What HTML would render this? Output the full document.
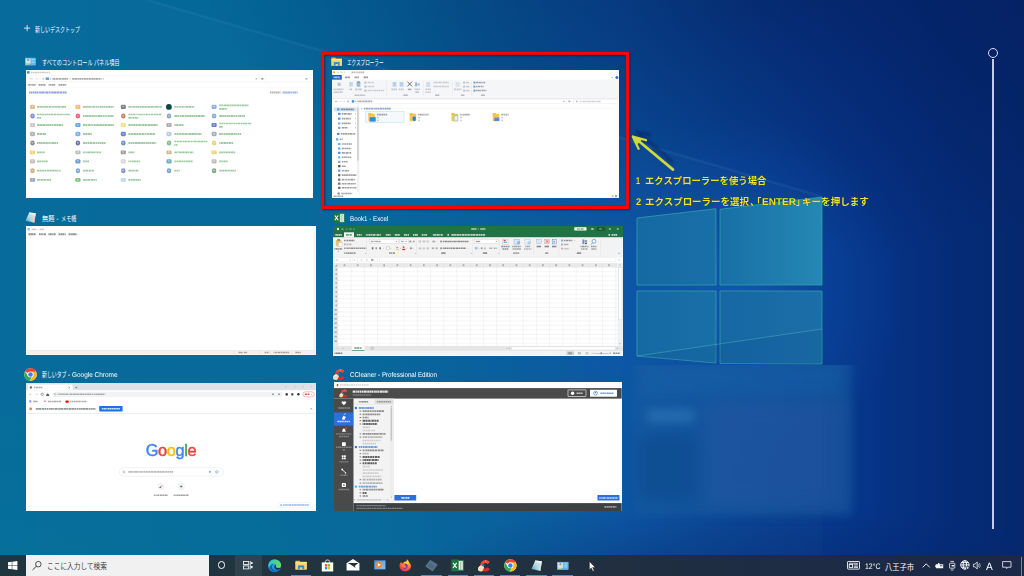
<!DOCTYPE html>
<html lang="ja"><head><meta charset="utf-8"><title>Task View</title>
<style>
html,body{margin:0;padding:0}
body{width:1024px;height:576px;overflow:hidden;position:relative;background:#04699a;font-family:"Liberation Sans",sans-serif}
div,svg,span.lt,span.ht{position:absolute}
svg{overflow:visible}
span.lt{white-space:nowrap;transform-origin:0 0;text-rendering:geometricPrecision;-webkit-font-smoothing:antialiased}
span.ht{white-space:nowrap;color:transparent;overflow:hidden;line-height:1;height:1.2em;user-select:none}
.th{overflow:hidden;background:#fff}
.b{filter:blur(.45px)}
svg text.jt{font-family:"Liberation Sans","Noto Sans CJK JP",sans-serif}
</style></head><body>
<div style="left:0;top:0;width:1024px;height:576px;background:radial-gradient(ellipse 170px 175px at 735px 292px, rgba(16,100,190,.5), rgba(12,85,175,.25) 55%, rgba(10,70,150,0) 100%),radial-gradient(ellipse 580px 300px at 780px -40px, rgba(3,22,80,.6), rgba(3,22,80,.28) 55%, rgba(3,22,80,0) 100%),radial-gradient(ellipse 640px 240px at 0px 576px, rgba(0,118,150,.32), rgba(0,118,150,0) 100%),radial-gradient(ellipse 360px 90px at 740px 590px, rgba(3,35,100,.5), rgba(3,35,100,.25) 55%, rgba(3,35,100,0) 100%),linear-gradient(90deg,#04699a 0,#046899 250px,#05649a 400px,#075c9d 520px,#0a55a3 620px,#094b9c 700px,#083d93 800px,#063386 880px,#052c78 950px,#05286f 1024px)"></div><svg style="left:0;top:0" width="1024" height="576" viewBox="0 0 1024 576"><defs><linearGradient id="pg" x1="0" y1="0" x2="1" y2="0"><stop offset="0" stop-color="#186fa6"/><stop offset="1" stop-color="#2588b4"/></linearGradient><linearGradient id="pg2" x1="0" y1="0" x2="1" y2="0"><stop offset="0" stop-color="#1569a3"/><stop offset="1" stop-color="#196fa7"/></linearGradient><linearGradient id="pg3" x1="0" y1="0" x2="1" y2="0"><stop offset="0" stop-color="#1667a3"/><stop offset="1" stop-color="#1b6fa8"/></linearGradient><filter id="bl8" x="-20%" y="-20%" width="140%" height="140%"><feGaussianBlur stdDeviation="7"/></filter><filter id="bl3" x="-20%" y="-20%" width="140%" height="140%"><feGaussianBlur stdDeviation="3"/></filter></defs><polygon points="147,0 822,196.5 822,576 0,576 0,0" fill="rgba(255,255,255,.015)"/><line x1="147" y1="0" x2="822" y2="196.5" stroke="rgba(150,200,240,.075)" stroke-width="2.6"/><polygon points="637,218 716,208.7 716,285 637,285" fill="url(#pg2)" stroke="#35aaa6" stroke-width=".7"/><polygon points="720,209.3 822,197 822,285 720,285" fill="url(#pg)" stroke="#35aaa6" stroke-width=".7"/><polygon points="637,291 716,291 716,363 637,356" fill="url(#pg2)" stroke="#35aaa6" stroke-width=".7"/><polygon points="720,291 822,291 822,364 720,363.5" fill="url(#pg3)" stroke="#35aaa6" stroke-width=".7"/><polygon points="637,356 822,329 822,364 720,363.5 716,363" fill="rgba(10,70,140,.18)"/><line x1="637" y1="356" x2="822" y2="329" stroke="rgba(80,190,190,.55)" stroke-width=".8"/></svg><div style="left:600px;top:364.5px;width:300px;height:185px;overflow:hidden"><div style="left:34px;top:-8px;width:218px;height:158px;background:rgba(24,92,160,.6);filter:blur(5px)"></div><div style="left:40px;top:0px;width:200px;height:30px;background:rgba(22,100,170,.35);filter:blur(5px)"></div><div style="left:48px;top:44px;width:46px;height:14px;background:rgba(60,135,195,.4);filter:blur(4px)"></div><div style="left:104px;top:36px;width:140px;height:105px;background:rgba(55,85,160,.28);filter:blur(9px)"></div><div style="left:38px;top:70px;width:58px;height:66px;background:rgba(6,60,120,.32);filter:blur(7px)"></div></div><svg style="left:24px;top:25.3px" width="6.2" height="6.2" viewBox="0 0 6.2 6.2"><path d="M3.1 0V6.2M0 3.1H6.2" stroke="#fff" stroke-width=".8" fill="none"/></svg><svg style="left:35px;top:25px;" width="46" height="9.24" viewBox="0 0 46 9.24"><text class="jt" x="0" y="6.65" font-size="6.6" fill="#fff" textLength="45" lengthAdjust="spacingAndGlyphs">新しいデスクトップ</text></svg><div class="th" id="cp" style="left:26px;top:70px;width:287.1px;height:128.4px"><svg class="b" style="left:0;top:0" width="287.1" height="128.4" viewBox="26 70 287.1 128.4"><rect x="27" y="71.2" width="2.6" height="2.4" fill="#3d8fe0"/><path d="M31 72.4h19" stroke="#888" stroke-width="1.5" opacity="0.45" stroke-dasharray="1.61 0.49 1.53 0.35 2.03 0.52 1.79 0.38 1.82 0.35 1.94 0.3 1.99 0.45 1.54 0.53 2.38 0.31"/><path d="M30 78.8h3" stroke="#bbb" stroke-width="1.2" opacity="0.6"/><path d="M35.5 78.8h3" stroke="#ccc" stroke-width="1.2" opacity="0.6"/><path d="M42.5 78.8h1.6" stroke="#c88" stroke-width="1.4" opacity="0.7"/><rect x="45.6" y="77.4" width="3.4" height="2.6" fill="#5aa5dc"/><path d="M50 78.8h1" stroke="#888" stroke-width="1.2" opacity="0.6"/><path d="M52.5 78.8h15.5" stroke="#555" stroke-width="1.8" opacity="0.5" stroke-dasharray="2.66 0.47 2.54 0.42 2.66 0.53 2.11 0.32 2.3 0.34 1.43 0.37"/><path d="M69.6 78.8h1" stroke="#888" stroke-width="1.2" opacity="0.6"/><path d="M72.2 78.8h29.5" stroke="#555" stroke-width="1.8" opacity="0.5" stroke-dasharray="2.21 0.27 2.64 0.42 1.18 0.36 2.25 0.47 1.29 0.48 2.24 0.35 1.99 0.39 2.12 0.45 2.47 0.28 1.63 0.3 2.58 0.46 1.56 0.55 2.52 0.42"/><path d="M102.8 78.8h1" stroke="#888" stroke-width="1.2" opacity="0.6"/><rect x="27" y="81.6" width="285" height="0.5" fill="#ececec"/><rect x="27" y="75.4" width="285" height="0.4" fill="#f0f0f0"/><path d="M255.6 78.8h1.4" stroke="#888" stroke-width="1.2" opacity="0.7"/><path d="M261.4 78.8h2" stroke="#666" stroke-width="1.6" opacity="0.7"/><rect x="258.5" y="76.2" width="0.4" height="5" fill="#e4e4e4"/><rect x="265" y="76.2" width="0.4" height="5" fill="#e4e4e4"/><path d="M305.5 78.8h2" stroke="#888" stroke-width="1.6" opacity="0.6"/><path d="M28.2 84.9h7.4" stroke="#333" stroke-width="1.8" opacity="0.48" stroke-dasharray="2.17 0.38 0.87 0.53 1.6 0.31 1.92 0.49"/><path d="M38.6 84.9h7.2" stroke="#333" stroke-width="1.8" opacity="0.48" stroke-dasharray="1.76 0.33 1.95 0.53 2.1 0.31 1.65 0.42"/><path d="M48.6 84.9h7.2" stroke="#333" stroke-width="1.8" opacity="0.48" stroke-dasharray="1.16 0.41 1.41 0.53 1.68 0.31 0.88 0.54 2 0.44"/><path d="M58.6 84.9h7.6" stroke="#333" stroke-width="1.8" opacity="0.48" stroke-dasharray="2.13 0.29 1.33 0.5 1.87 0.47 1.5 0.49"/><rect x="27" y="87.4" width="285" height="0.4" fill="#f2f2f2"/><path d="M29 92.5h37.5" stroke="#2d52b8" stroke-width="2" opacity="0.55" stroke-dasharray="1.34 0.47 1.41 0.46 1.24 0.43 2.02 0.34 1.34 0.48 1.26 0.28 1.61 0.26 2 0.48 1.13 0.31 2.36 0.46 1.23 0.36 1.19 0.31 1.67 0.25 2.73 0.37 2.52 0.41 2.73 0.53 1.23 0.33 2.65 0.46"/><path d="M270 92.5h10.5" stroke="#666" stroke-width="1.9" opacity="0.5" stroke-dasharray="1.29 0.51 1.24 0.38 1.51 0.51 2.14 0.31 1.41 0.38 1.01 0.26"/><path d="M282.6 92.5h15" stroke="#3a73d8" stroke-width="1.9" opacity="0.55" stroke-dasharray="2.19 0.5 2.39 0.44 2.48 0.52 1.15 0.48 1.72 0.35 1.55 0.51 2.05 0.33"/><rect x="30" y="104.7" width="5" height="4.4" fill="#c9a85c" rx="1.4" opacity="0.72"/><circle cx="32.4" cy="106.6" r="1" fill="#fff" opacity="0.4"/><path d="M37 106.9h29" stroke="#3f9646" stroke-width="1.8" opacity="0.5" stroke-dasharray="2.58 0.45 1.78 0.28 1.51 0.5 1.89 0.38 1.72 0.39 2.71 0.42 1.07 0.28 1.56 0.51 1.92 0.46 2.52 0.35 1.21 0.36 2.79 0.31 2.38 0.34"/><rect x="30.3" y="113.5" width="4.4" height="5" fill="#4a5fc4" rx="2.2" opacity="0.72"/><circle cx="32.4" cy="115.7" r="1" fill="#fff" opacity="0.4"/><path d="M37 114.5h33" stroke="#3f9646" stroke-width="1.7" opacity="0.5" stroke-dasharray="2.48 0.4 1.82 0.36 2.02 0.37 1.97 0.33 1.43 0.29 1.64 0.4 2.59 0.51 2.68 0.49 2.1 0.42 2.41 0.44 1.24 0.28 1.07 0.44 1.2 0.28 2.25 0.27 2.05 0.53"/><path d="M37 117.9h4" stroke="#3f9646" stroke-width="1.7" opacity="0.5" stroke-dasharray="1.98 0.34 2.31 0.41"/><rect x="29.9" y="123.1" width="5.2" height="3.9" fill="#b4b4b4" rx="1" opacity="0.72"/><circle cx="32.4" cy="124.7" r="1" fill="#fff" opacity="0.4"/><path d="M37 125h26" stroke="#3f9646" stroke-width="1.8" opacity="0.5" stroke-dasharray="2.42 0.28 2.42 0.34 2.81 0.28 1.35 0.3 1.74 0.37 1.69 0.43 2.01 0.5 2.05 0.27 2.09 0.4 2.84 0.49 1.58 0.41"/><rect x="30" y="131.8" width="5" height="4.4" fill="#8f9499" rx="1.4" opacity="0.72"/><circle cx="32.4" cy="133.7" r="1" fill="#fff" opacity="0.4"/><path d="M37 134h9.4" stroke="#3f9646" stroke-width="1.8" opacity="0.5" stroke-dasharray="2.36 0.4 2.73 0.47 2.87 0.5 1.99 0.41"/><rect x="30.3" y="140.5" width="4.4" height="5" fill="#5d6066" rx="2.2" opacity="0.72"/><circle cx="32.4" cy="142.7" r="1" fill="#fff" opacity="0.4"/><path d="M37 143h21" stroke="#3f9646" stroke-width="1.8" opacity="0.5" stroke-dasharray="1.3 0.39 2.12 0.27 1.68 0.39 2.47 0.41 1.79 0.42 1.47 0.54 1.33 0.37 2.12 0.25 2.05 0.54 1.24 0.43"/><rect x="29.9" y="150.4" width="5.2" height="3.9" fill="#e6c13e" rx="1" opacity="0.72"/><circle cx="32.4" cy="152" r="1" fill="#fff" opacity="0.4"/><path d="M37 152.3h8" stroke="#3f9646" stroke-width="1.8" opacity="0.5" stroke-dasharray="2.71 0.31 1.76 0.48 2.32 0.31 2.48 0.51"/><rect x="30" y="159.2" width="5" height="4.4" fill="#a9a9a9" rx="1.4" opacity="0.72"/><circle cx="32.4" cy="161.1" r="1" fill="#fff" opacity="0.4"/><path d="M37 161.4h11" stroke="#3f9646" stroke-width="1.8" opacity="0.5" stroke-dasharray="1.93 0.27 2.17 0.43 1.61 0.29 1.19 0.37 2.21 0.28 2.8 0.48"/><rect x="30.3" y="168.2" width="4.4" height="5" fill="#b3924f" rx="2.2" opacity="0.72"/><circle cx="32.4" cy="170.4" r="1" fill="#fff" opacity="0.4"/><path d="M37 170.7h24" stroke="#3f9646" stroke-width="1.8" opacity="0.5" stroke-dasharray="2.59 0.41 1.73 0.31 2.12 0.36 1.96 0.51 2.19 0.29 2.15 0.29 2.18 0.32 2.29 0.43 1.06 0.5 1.1 0.53 2.87 0.55"/><rect x="29.9" y="177.9" width="5.2" height="3.9" fill="#6f7f9f" rx="1" opacity="0.72"/><circle cx="32.4" cy="179.5" r="1" fill="#fff" opacity="0.4"/><path d="M37 179.8h14.6" stroke="#3f9646" stroke-width="1.8" opacity="0.5" stroke-dasharray="2.82 0.53 2.8 0.26 2.58 0.53 2.67 0.42 1.55 0.42 2.18 0.46"/><rect x="75.4" y="104.7" width="5" height="4.4" fill="#f2a233" rx="1.4" opacity="0.72"/><circle cx="77.8" cy="106.6" r="1" fill="#fff" opacity="0.4"/><path d="M83 106.9h30.8" stroke="#3f9646" stroke-width="1.8" opacity="0.5" stroke-dasharray="2.57 0.3 1.98 0.36 2.58 0.53 1.16 0.4 2.28 0.55 1.3 0.46 1.86 0.45 1.17 0.27 1.79 0.43 1.9 0.47 1.75 0.36 2.1 0.37 2.42 0.35 1.08 0.45"/><rect x="75.7" y="113.5" width="4.4" height="5" fill="#e0204c" rx="2.2" opacity="0.72"/><circle cx="77.8" cy="115.7" r="1" fill="#fff" opacity="0.4"/><path d="M83 116h30.8" stroke="#3f9646" stroke-width="1.8" opacity="0.5" stroke-dasharray="1.3 0.39 2.12 0.27 1.68 0.39 2.47 0.41 1.79 0.42 1.47 0.54 1.33 0.37 2.12 0.25 2.05 0.54 1.24 0.43 1.19 0.42 1.18 0.55 1.89 0.54 2.47 0.41 1.26 0.41"/><rect x="75.3" y="123.1" width="5.2" height="3.9" fill="#2b84e2" rx="1" opacity="0.72"/><circle cx="77.8" cy="124.7" r="1" fill="#fff" opacity="0.4"/><path d="M83 125h30.8" stroke="#3f9646" stroke-width="1.8" opacity="0.5" stroke-dasharray="2.15 0.33 1.47 0.53 2.57 0.32 1.3 0.36 1.24 0.48 2.05 0.38 2.63 0.34 2.68 0.46 2.25 0.37 2.2 0.46 2.77 0.27 1.68 0.28 2.37 0.34"/><rect x="75.4" y="131.8" width="5" height="4.4" fill="#4293e2" rx="1.4" opacity="0.72"/><circle cx="77.8" cy="133.7" r="1" fill="#fff" opacity="0.4"/><path d="M83 134h8.8" stroke="#3f9646" stroke-width="1.8" opacity="0.5" stroke-dasharray="2.2 0.36 2.02 0.38 2.09 0.27 2.73 0.26"/><rect x="75.7" y="140.5" width="4.4" height="5" fill="#2f3f86" rx="2.2" opacity="0.72"/><circle cx="77.8" cy="142.7" r="1" fill="#fff" opacity="0.4"/><path d="M83 143h22.6" stroke="#3f9646" stroke-width="1.8" opacity="0.5" stroke-dasharray="2.09 0.37 1.66 0.43 1.94 0.42 2.56 0.5 1.99 0.54 1.69 0.55 1.37 0.45 1.77 0.39 1.98 0.3 1.82 0.38"/><rect x="75.3" y="150.4" width="5.2" height="3.9" fill="#a4a8a4" rx="1" opacity="0.72"/><circle cx="77.8" cy="152" r="1" fill="#fff" opacity="0.4"/><path d="M83 152.3h18" stroke="#3f9646" stroke-width="1.8" opacity="0.5" stroke-dasharray="1.29 0.32 1.04 0.48 1.46 0.33 2.43 0.35 2.13 0.32 1.84 0.43 1.26 0.29 1.78 0.53 2.48 0.52"/><rect x="75.4" y="159.2" width="5" height="4.4" fill="#3273c4" rx="1.4" opacity="0.72"/><circle cx="77.8" cy="161.1" r="1" fill="#fff" opacity="0.4"/><path d="M83 161.4h6" stroke="#3f9646" stroke-width="1.8" opacity="0.5" stroke-dasharray="2.41 0.35 1.23 0.29 1.73 0.46"/><rect x="75.7" y="168.2" width="4.4" height="5" fill="#4a86c0" rx="2.2" opacity="0.72"/><circle cx="77.8" cy="170.4" r="1" fill="#fff" opacity="0.4"/><path d="M83 170.7h11" stroke="#3f9646" stroke-width="1.8" opacity="0.5" stroke-dasharray="2.43 0.28 2.49 0.52 2.85 0.53 2.19 0.37"/><rect x="75.3" y="177.9" width="5.2" height="3.9" fill="#43b244" rx="1" opacity="0.72"/><circle cx="77.8" cy="179.5" r="1" fill="#fff" opacity="0.4"/><path d="M83 179.8h13.8" stroke="#3f9646" stroke-width="1.8" opacity="0.5" stroke-dasharray="2.36 0.25 1.7 0.37 2.73 0.5 2.44 0.38 1.45 0.49 1.6 0.31"/><rect x="120.8" y="104.7" width="5" height="4.4" fill="#3f4f56" rx="1.4" opacity="0.72"/><circle cx="123.2" cy="106.6" r="1" fill="#fff" opacity="0.4"/><path d="M128.4 106.9h33.7" stroke="#3f9646" stroke-width="1.8" opacity="0.5" stroke-dasharray="2.45 0.47 1.41 0.35 1.9 0.42 2.34 0.31 1.64 0.4 1.44 0.34 2.19 0.34 2.68 0.51 2.3 0.39 2.77 0.41 1.28 0.37 2.71 0.39 1.27 0.4 1.42 0.27 1.11 0.4"/><rect x="121.1" y="113.5" width="4.4" height="5" fill="#a4502f" rx="2.2" opacity="0.72"/><circle cx="123.2" cy="115.7" r="1" fill="#fff" opacity="0.4"/><path d="M128.4 114.5h33" stroke="#3f9646" stroke-width="1.7" opacity="0.5" stroke-dasharray="2.08 0.4 1.63 0.42 2.03 0.42 1.29 0.53 1.44 0.41 1.71 0.48 1.76 0.44 1.48 0.5 2.66 0.47 1.56 0.52 2.75 0.53 1.88 0.41 1.89 0.35 2.86 0.42"/><path d="M128.4 117.9h10" stroke="#3f9646" stroke-width="1.7" opacity="0.5" stroke-dasharray="2.59 0.34 1.33 0.28 1.18 0.49 2.85 0.31 1.49 0.28"/><rect x="120.7" y="123.1" width="5.2" height="3.9" fill="#e8d264" rx="1" opacity="0.72"/><circle cx="123.2" cy="124.7" r="1" fill="#fff" opacity="0.4"/><path d="M128.4 125h29.3" stroke="#3f9646" stroke-width="1.8" opacity="0.5" stroke-dasharray="1.8 0.33 2.2 0.43 2.09 0.44 2.04 0.53 2.69 0.54 2.67 0.38 2.74 0.54 2.78 0.39 1.79 0.32 2.79 0.43 2.36 0.53"/><rect x="120.8" y="131.8" width="5" height="4.4" fill="#2f4fc4" rx="1.4" opacity="0.72"/><circle cx="123.2" cy="133.7" r="1" fill="#fff" opacity="0.4"/><path d="M128.4 134h27" stroke="#3f9646" stroke-width="1.8" opacity="0.5" stroke-dasharray="2.03 0.42 2.53 0.32 2.72 0.27 1.44 0.39 2.73 0.49 2.72 0.47 1.44 0.52 2.07 0.48 2.56 0.36 2.61 0.52"/><rect x="121.1" y="140.5" width="4.4" height="5" fill="#2f62c4" rx="2.2" opacity="0.72"/><circle cx="123.2" cy="142.7" r="1" fill="#fff" opacity="0.4"/><path d="M128.4 143h27.8" stroke="#3f9646" stroke-width="1.8" opacity="0.5" stroke-dasharray="1.69 0.44 1.55 0.44 2.05 0.45 2.84 0.28 2.75 0.39 1.75 0.25 2.04 0.48 1.65 0.29 1.45 0.36 1.84 0.48 2.06 0.33 1.44 0.3 1.79 0.48"/><rect x="120.7" y="150.4" width="5.2" height="3.9" fill="#70787f" rx="1" opacity="0.72"/><circle cx="123.2" cy="152" r="1" fill="#fff" opacity="0.4"/><path d="M128.4 152.3h6.4" stroke="#3f9646" stroke-width="1.8" opacity="0.5" stroke-dasharray="1.46 0.3 2.72 0.28 1.24 0.41"/><rect x="120.8" y="159.2" width="5" height="4.4" fill="#c1c9d1" rx="1.4" opacity="0.72"/><circle cx="123.2" cy="161.1" r="1" fill="#fff" opacity="0.4"/><path d="M128.4 161.4h11.7" stroke="#3f9646" stroke-width="1.8" opacity="0.5" stroke-dasharray="1.38 0.35 1.17 0.47 1.42 0.34 2.39 0.33 2.32 0.48 1.42 0.35"/><rect x="121.1" y="168.2" width="4.4" height="5" fill="#5563c4" rx="2.2" opacity="0.72"/><circle cx="123.2" cy="170.4" r="1" fill="#fff" opacity="0.4"/><path d="M128.4 170.7h10.3" stroke="#3f9646" stroke-width="1.8" opacity="0.5" stroke-dasharray="2.73 0.31 1.96 0.27 1.15 0.5 2.73 0.29 1.59 0.27"/><rect x="120.7" y="177.9" width="5.2" height="3.9" fill="#a1c9e2" rx="1" opacity="0.72"/><circle cx="123.2" cy="179.5" r="1" fill="#fff" opacity="0.4"/><path d="M128.4 179.8h12.3" stroke="#3f9646" stroke-width="1.8" opacity="0.5" stroke-dasharray="1.94 0.35 1.87 0.33 2.51 0.41 1.28 0.34 1.79 0.33 2.21 0.45"/><circle cx="168.9" cy="106.9" r="2.9" fill="#0b4a40"/><path d="M174.4 106.9h20" stroke="#3f9646" stroke-width="1.8" opacity="0.5" stroke-dasharray="2.15 0.5 1.66 0.53 1.87 0.37 2.38 0.45 1.04 0.4 2.6 0.31 2.39 0.44 1.78 0.39 2.78 0.54"/><rect x="166.8" y="113.5" width="4.4" height="5" fill="#5f80b2" rx="2.2" opacity="0.72"/><circle cx="168.9" cy="115.7" r="1" fill="#fff" opacity="0.4"/><path d="M174.4 116h30.8" stroke="#3f9646" stroke-width="1.8" opacity="0.5" stroke-dasharray="2.77 0.29 1.87 0.53 1.45 0.3 2.53 0.52 1.21 0.34 2.63 0.32 2.17 0.38 1.32 0.4 2.28 0.32 1.36 0.36 2.83 0.54 2.83 0.46 1.68 0.33"/><rect x="166.4" y="123.1" width="5.2" height="3.9" fill="#8f8f8f" rx="1" opacity="0.72"/><circle cx="168.9" cy="124.7" r="1" fill="#fff" opacity="0.4"/><path d="M174.4 125h9.7" stroke="#3f9646" stroke-width="1.8" opacity="0.5" stroke-dasharray="1.37 0.33 2.31 0.49 2.49 0.42 1.6 0.48 1.29 0.43"/><rect x="166.5" y="131.8" width="5" height="4.4" fill="#9fb7d1" rx="1.4" opacity="0.72"/><circle cx="168.9" cy="133.7" r="1" fill="#fff" opacity="0.4"/><path d="M174.4 134h27.2" stroke="#3f9646" stroke-width="1.8" opacity="0.5" stroke-dasharray="1.84 0.45 1.44 0.37 1.24 0.31 1.56 0.35 1.94 0.55 2.87 0.41 1.17 0.27 2.53 0.25 2.04 0.3 1.83 0.27 1.4 0.45 2.33 0.27 1.17 0.29"/><rect x="166.8" y="140.5" width="4.4" height="5" fill="#4fa261" rx="2.2" opacity="0.72"/><circle cx="168.9" cy="142.7" r="1" fill="#fff" opacity="0.4"/><path d="M174.4 141.5h33" stroke="#3f9646" stroke-width="1.7" opacity="0.5" stroke-dasharray="2 0.5 2.37 0.42 2.23 0.51 1.66 0.35 2.51 0.41 2.62 0.52 1.55 0.31 1.08 0.44 2.56 0.25 1.07 0.33 2.13 0.3 2.75 0.25 1.7 0.39 2.35 0.36"/><path d="M174.4 144.9h3" stroke="#3f9646" stroke-width="1.7" opacity="0.5" stroke-dasharray="1.1 0.33 1.92 0.52"/><rect x="166.4" y="150.4" width="5.2" height="3.9" fill="#c2a05f" rx="1" opacity="0.72"/><circle cx="168.9" cy="152" r="1" fill="#fff" opacity="0.4"/><path d="M174.4 152.3h19" stroke="#3f9646" stroke-width="1.8" opacity="0.5" stroke-dasharray="2.62 0.53 1.09 0.53 2.6 0.26 2.3 0.35 2.83 0.42 1.32 0.51 2.35 0.34 1.97 0.33"/><rect x="166.5" y="159.2" width="5" height="4.4" fill="#2f90a2" rx="1.4" opacity="0.72"/><circle cx="168.9" cy="161.1" r="1" fill="#fff" opacity="0.4"/><path d="M174.4 161.4h18.5" stroke="#3f9646" stroke-width="1.8" opacity="0.5" stroke-dasharray="1.49 0.48 1.88 0.41 2.81 0.45 1.65 0.5 1.15 0.44 2.13 0.35 1.94 0.4 1.74 0.36 2.65 0.34"/><rect x="166.8" y="168.2" width="4.4" height="5" fill="#3f80c2" rx="2.2" opacity="0.72"/><circle cx="168.9" cy="170.4" r="1" fill="#fff" opacity="0.4"/><path d="M174.4 170.7h5.3" stroke="#3f9646" stroke-width="1.8" opacity="0.5" stroke-dasharray="2.16 0.51 1.04 0.4 1.53 0.38"/><rect x="211.6" y="104.7" width="5" height="4.4" fill="#6291d2" rx="1.4" opacity="0.72"/><circle cx="214" cy="106.6" r="1" fill="#fff" opacity="0.4"/><path d="M219.2 105.4h29.3" stroke="#3f9646" stroke-width="1.7" opacity="0.5" stroke-dasharray="2.41 0.4 1.19 0.52 2.8 0.33 2.37 0.4 1.78 0.29 2.1 0.36 2.43 0.4 2.67 0.38 1.11 0.49 2.46 0.33 2.41 0.35 1.51 0.37"/><path d="M219.2 108.8h8" stroke="#3f9646" stroke-width="1.7" opacity="0.5" stroke-dasharray="2.54 0.28 2.34 0.42 1.79 0.43 1.59 0.28"/><rect x="211.9" y="113.5" width="4.4" height="5" fill="#5291c2" rx="2.2" opacity="0.72"/><circle cx="214" cy="115.7" r="1" fill="#fff" opacity="0.4"/><path d="M219.2 116h25.8" stroke="#3f9646" stroke-width="1.8" opacity="0.5" stroke-dasharray="2.77 0.28 1.7 0.35 1.68 0.47 2.4 0.31 1.39 0.43 2.13 0.38 1.83 0.43 1.29 0.54 1.32 0.3 1.99 0.45 2.04 0.3 1.22 0.54"/><rect x="211.5" y="123.1" width="5.2" height="3.9" fill="#2f4fc2" rx="1" opacity="0.72"/><circle cx="214" cy="124.7" r="1" fill="#fff" opacity="0.4"/><path d="M219.2 123.5h32" stroke="#3f9646" stroke-width="1.7" opacity="0.5" stroke-dasharray="2.39 0.47 1.48 0.36 1.27 0.54 2.85 0.51 2.62 0.5 1.19 0.42 1.8 0.55 1.12 0.35 2.63 0.55 1.61 0.39 1.15 0.25 2.82 0.51 2.38 0.27 1.29 0.48"/><path d="M219.2 126.9h4" stroke="#3f9646" stroke-width="1.7" opacity="0.5" stroke-dasharray="2.83 0.52 1.63 0.42"/><rect x="211.6" y="131.8" width="5" height="4.4" fill="#7f90a2" rx="1.4" opacity="0.72"/><circle cx="214" cy="133.7" r="1" fill="#fff" opacity="0.4"/><path d="M219.2 134h22" stroke="#3f9646" stroke-width="1.8" opacity="0.5" stroke-dasharray="2.21 0.25 1.6 0.55 1.8 0.55 1.94 0.29 2.08 0.3 2.78 0.48 1.76 0.43 1.22 0.36 1.71 0.53 1.24 0.33"/><rect x="211.9" y="140.5" width="4.4" height="5" fill="#e2c23f" rx="2.2" opacity="0.72"/><circle cx="214" cy="142.7" r="1" fill="#fff" opacity="0.4"/><path d="M219.2 143h14" stroke="#3f9646" stroke-width="1.8" opacity="0.5" stroke-dasharray="1.05 0.53 2.26 0.5 2.73 0.31 1.81 0.49 2.2 0.39 2.75 0.3"/><rect x="211.5" y="150.4" width="5.2" height="3.9" fill="#e2c43f" rx="1" opacity="0.72"/><circle cx="214" cy="152" r="1" fill="#fff" opacity="0.4"/><path d="M219.2 152.3h16" stroke="#3f9646" stroke-width="1.8" opacity="0.5" stroke-dasharray="2.17 0.28 1.89 0.34 1.52 0.41 2.34 0.36 2.01 0.26 2.73 0.31 2.85 0.36"/><rect x="211.6" y="159.2" width="5" height="4.4" fill="#a2a2a2" rx="1.4" opacity="0.72"/><circle cx="214" cy="161.1" r="1" fill="#fff" opacity="0.4"/><path d="M219.2 161.4h8.8" stroke="#3f9646" stroke-width="1.8" opacity="0.5" stroke-dasharray="2.36 0.37 1.26 0.35 1.68 0.27 1.56 0.41 1.84 0.52"/><rect x="211.9" y="168.2" width="4.4" height="5" fill="#4f8252" rx="2.2" opacity="0.72"/><circle cx="214" cy="170.4" r="1" fill="#fff" opacity="0.4"/><path d="M219.2 170.7h16.7" stroke="#3f9646" stroke-width="1.8" opacity="0.5" stroke-dasharray="2.29 0.32 2.68 0.38 2.06 0.45 1.51 0.29 1.33 0.31 1.96 0.32 1.42 0.36 2.2 0.45"/></svg></div><div class="th" id="ex" style="left:332px;top:70px;width:287px;height:128.4px"><svg class="b" style="left:0;top:0" width="287" height="128.4" viewBox="332 70 287 128.4"><rect x="332.8" y="71.4" width="2.2" height="1.8" fill="#e8b63c"/><path d="M337 72.4h2" stroke="#bbb" stroke-width="1.4" opacity="0.6"/><path d="M340.5 72.4h2" stroke="#bbb" stroke-width="1.4" opacity="0.6"/><path d="M344 72.4h1" stroke="#bbb" stroke-width="1.4" opacity="0.6"/><path d="M351.6 72.4h12.6" stroke="#777" stroke-width="1.7" opacity="0.5" stroke-dasharray="2.12 0.29 0.91 0.48 1.27 0.43 1.19 0.46 1.6 0.32 1.4 0.32 2.07 0.32"/><rect x="332" y="75" width="9.8" height="4.8" fill="#1b5fb9"/><path d="M333.6 77.4h6.6" stroke="#fff" stroke-width="1.7" opacity="0.7" stroke-dasharray="1.14 0.27 2.01 0.37 1.48 0.5 1.8 0.32"/><path d="M345 77.4h5.2" stroke="#444" stroke-width="1.7" opacity="0.55" stroke-dasharray="2.21 0.43 2.3 0.5"/><path d="M354.6 77.4h4.4" stroke="#444" stroke-width="1.7" opacity="0.55" stroke-dasharray="1.22 0.31 1.41 0.54 2.25 0.33"/><path d="M363.6 77.4h4.4" stroke="#444" stroke-width="1.7" opacity="0.55" stroke-dasharray="2.41 0.31 1.77 0.42"/><circle cx="616.9" cy="77.4" r="1.5" fill="#2a78d6"/><path d="M611.5 77.4h1.6" stroke="#999" stroke-width="1.2" opacity="0.6"/><rect x="332" y="79.8" width="287" height="18.4" fill="#f5f6f7"/><rect x="332" y="98" width="287" height="0.5" fill="#dadbdc"/><rect x="337.6" y="82.6" width="3" height="3.4" fill="#9db4cc" opacity="0.7"/><path d="M333.4 89.4h10" stroke="#8f98a1" stroke-width="1.6" opacity="0.5" stroke-dasharray="1.31 0.55 1.26 0.49 1.59 0.28 1.98 0.44 1.12 0.31 1.14 0.49"/><path d="M333.8 92.2h9" stroke="#8f98a1" stroke-width="1.6" opacity="0.5" stroke-dasharray="1.89 0.28 1.64 0.34 1.32 0.41 2.03 0.36 1.75 0.26"/><rect x="349.2" y="82" width="3.6" height="4.6" fill="#b9cde2" opacity="0.8"/><path d="M349.6 89.4h2.4" stroke="#8f98a1" stroke-width="1.6" opacity="0.5"/><rect x="356.6" y="81.8" width="3.8" height="5" fill="#8fb0d6" opacity="0.85"/><rect x="357.4" y="81.4" width="2.2" height="1.2" fill="#6e7f92"/><path d="M355 89.4h7" stroke="#8f98a1" stroke-width="1.6" opacity="0.5" stroke-dasharray="1.93 0.39 1.22 0.5 2.13 0.27 1.96 0.41"/><rect x="364.4" y="81.6" width="2" height="2" fill="#8aa6c4" opacity="0.7"/><path d="M367.6 82.6h6.4" stroke="#8f98a1" stroke-width="1.5" opacity="0.45" stroke-dasharray="2.27 0.51 1.24 0.38 1.68 0.41"/><rect x="364.4" y="85.6" width="2" height="2" fill="#9aa8b8" opacity="0.7"/><path d="M367.6 86.6h6.6" stroke="#8f98a1" stroke-width="1.5" opacity="0.45" stroke-dasharray="1.09 0.29 1.98 0.31 1.41 0.28 2.2 0.55"/><rect x="364.4" y="89.6" width="2" height="2" fill="#8aa6c4" opacity="0.7"/><path d="M367.6 90.6h17" stroke="#8f98a1" stroke-width="1.5" opacity="0.45" stroke-dasharray="1.88 0.45 1.07 0.38 0.93 0.46 0.91 0.44 2.31 0.38 1.4 0.33 1.51 0.48 1.96 0.3 1.37 0.39 1.79 0.45"/><path d="M354.6 95.2h10.6" stroke="#7f868e" stroke-width="1.6" opacity="0.5" stroke-dasharray="2.27 0.45 2.23 0.53 1.69 0.52 1.6 0.49 1.44 0.51"/><rect x="386.4" y="81" width="0.4" height="15" fill="#e2e3e4"/><rect x="392.6" y="82" width="3.8" height="4.6" fill="#a9c7ea" opacity="0.8"/><rect x="399.6" y="82" width="3.8" height="4.6" fill="#a9c7ea" opacity="0.8"/><path d="M391.4 89.4h5.6" stroke="#8f98a1" stroke-width="1.6" opacity="0.5" stroke-dasharray="1.58 0.45 1.9 0.37 1.86 0.3"/><path d="M398.8 89.4h5" stroke="#8f98a1" stroke-width="1.6" opacity="0.5" stroke-dasharray="1.53 0.53 1.8 0.46 2.36 0.44"/><path d="M407.4 81.6L412 86.4M412 81.6L407.4 86.4" fill="none" stroke="#3b4652" stroke-width="0.75"/><path d="M407.8 89.4h3.6" stroke="#6f767e" stroke-width="1.6" opacity="0.55"/><rect x="415.4" y="82.4" width="1.2" height="4" fill="#5f8fcc"/><rect x="417.4" y="83.4" width="2.2" height="2.2" fill="#9bbbe0"/><path d="M414.4 89.4h5.4" stroke="#8f98a1" stroke-width="1.6" opacity="0.5" stroke-dasharray="1.28 0.46 2.41 0.36 1.23 0.37"/><path d="M415.4 92.2h3.4" stroke="#8f98a1" stroke-width="1.6" opacity="0.5"/><path d="M403.4 95.2h4.4" stroke="#7f868e" stroke-width="1.6" opacity="0.5"/><rect x="423.4" y="81" width="0.4" height="15" fill="#e2e3e4"/><rect x="426.2" y="82" width="4" height="4.8" fill="#c4d6ea" opacity="0.8"/><path d="M425.4 89.4h5.6" stroke="#8f98a1" stroke-width="1.6" opacity="0.45" stroke-dasharray="1.97 0.51 1.92 0.37 0.91 0.35"/><path d="M425.4 92.2h5.6" stroke="#8f98a1" stroke-width="1.6" opacity="0.45" stroke-dasharray="1.23 0.49 2.47 0.38 0.92 0.43"/><path d="M433.4 82.6h15.6" stroke="#8f98a1" stroke-width="1.5" opacity="0.45" stroke-dasharray="1.17 0.34 2.11 0.39 1.26 0.27 2 0.42 1.05 0.48 2.21 0.26 1.7 0.26 1 0.27 2.04 0.34"/><path d="M433.4 86.6h15.4" stroke="#8f98a1" stroke-width="1.5" opacity="0.45" stroke-dasharray="2.11 0.3 1.53 0.38 1.04 0.5 2.21 0.38 2.06 0.41 2.35 0.51 1.68 0.42"/><path d="M435 95.2h4.4" stroke="#7f868e" stroke-width="1.6" opacity="0.5"/><rect x="452.2" y="81" width="0.4" height="15" fill="#e2e3e4"/><rect x="455.6" y="82" width="4.2" height="4.8" fill="#d6dee8" opacity="0.8"/><path d="M454 89.4h7.4" stroke="#8f98a1" stroke-width="1.6" opacity="0.45" stroke-dasharray="2.39 0.49 1.93 0.35 1.26 0.29 1.49 0.4"/><rect x="463.2" y="81.6" width="1.8" height="2" fill="#9ab0c8" opacity="0.7"/><path d="M465.6 82.6h3.6" stroke="#8f98a1" stroke-width="1.5" opacity="0.45"/><rect x="463.2" y="85.6" width="1.8" height="2" fill="#9ab0c8" opacity="0.7"/><path d="M465.6 86.6h4" stroke="#8f98a1" stroke-width="1.5" opacity="0.45"/><rect x="463.2" y="89.6" width="1.8" height="2" fill="#9ab0c8" opacity="0.7"/><path d="M465.6 90.6h4" stroke="#8f98a1" stroke-width="1.5" opacity="0.45"/><path d="M461 95.2h3.4" stroke="#7f868e" stroke-width="1.6" opacity="0.5"/><rect x="471.4" y="81" width="0.4" height="15" fill="#e2e3e4"/><rect x="473.4" y="81.6" width="2" height="2" fill="#3f8fe0" opacity="0.8"/><path d="M476 82.6h9.2" stroke="#59626c" stroke-width="1.5" opacity="0.55" stroke-dasharray="2.33 0.33 2.26 0.36 1.49 0.48 2.41 0.26"/><rect x="473.4" y="85.6" width="2" height="2" fill="#3f8fe0" opacity="0.8"/><path d="M476 86.6h7.6" stroke="#59626c" stroke-width="1.5" opacity="0.55" stroke-dasharray="1.54 0.51 2.22 0.49 1.84 0.42 2.16 0.55"/><rect x="473.4" y="89.6" width="2" height="2" fill="#3f8fe0" opacity="0.8"/><path d="M476 90.6h10.4" stroke="#59626c" stroke-width="1.5" opacity="0.55" stroke-dasharray="1.33 0.29 2.23 0.28 0.97 0.55 1.91 0.27 1.26 0.51 1.43 0.4"/><path d="M481 95.2h4" stroke="#7f868e" stroke-width="1.6" opacity="0.5"/><path d="M335 101.4h2.4" stroke="#999" stroke-width="1.2" opacity="0.6"/><path d="M339.6 101.4h2.4" stroke="#ccc" stroke-width="1.2" opacity="0.6"/><path d="M343.6 101.4h1" stroke="#aaa" stroke-width="1.2" opacity="0.6"/><path d="M347.4 101.4h1.4" stroke="#666" stroke-width="1.6" opacity="0.6"/><rect x="351.8" y="100.2" width="2.4" height="2.4" fill="#3f8fe0"/><path d="M355.2 101.4h1" stroke="#777" stroke-width="1.2" opacity="0.6"/><path d="M357.4 101.4h14.8" stroke="#555" stroke-width="1.6" opacity="0.5" stroke-dasharray="1.23 0.47 1.83 0.36 1.09 0.39 1.85 0.55 2.4 0.54 2.22 0.35 2.46 0.53"/><rect x="349.6" y="99.4" width="221" height="0.4" fill="#e6e6e6"/><rect x="349.6" y="103.6" width="221" height="0.4" fill="#e6e6e6"/><path d="M563 101.4h1.6" stroke="#888" stroke-width="1.2" opacity="0.6"/><path d="M568.4 101.4h1.8" stroke="#777" stroke-width="1.6" opacity="0.6"/><rect x="566" y="99.4" width="0.4" height="4.4" fill="#e6e6e6"/><rect x="573.4" y="99.4" width="44.4" height="0.4" fill="#e6e6e6"/><rect x="573.4" y="103.6" width="44.4" height="0.4" fill="#e6e6e6"/><rect x="573.4" y="99.4" width="0.4" height="4.4" fill="#e6e6e6"/><path d="M576 101.4h1.6" stroke="#888" stroke-width="1.4" opacity="0.6"/><path d="M580 101.4h20.6" stroke="#999" stroke-width="1.5" opacity="0.45" stroke-dasharray="1.01 0.45 0.94 0.51 2.26 0.47 1.58 0.33 2.34 0.34 1.03 0.32 2.41 0.32 1.5 0.52 2.35 0.29 2.34 0.26"/><rect x="333.6" y="107.4" width="23" height="4" fill="#cfe3f6"/><rect x="337" y="108.3" width="2.4" height="2.2" fill="#3f8fe0" rx="0.5" opacity="0.85"/><path d="M340.8 109.4h13" stroke="#444" stroke-width="1.6" opacity="0.52" stroke-dasharray="2.01 0.33 2.32 0.47 2.35 0.28 1.67 0.33 1.79 0.29 2.34 0.37"/><rect x="338" y="112.8" width="2.4" height="2.2" fill="#2b7fe0" rx="0.5" opacity="0.85"/><path d="M341.8 113.9h9.8" stroke="#444" stroke-width="1.6" opacity="0.52" stroke-dasharray="1.67 0.53 2.24 0.33 0.94 0.42 2.37 0.37 1.49 0.46"/><path d="M355.2 113.9h0.8" stroke="#888" stroke-width="1.4" opacity="0.6"/><rect x="338" y="117.5" width="2.4" height="2.2" fill="#3d7fd0" rx="0.5" opacity="0.85"/><path d="M341.8 118.6h9" stroke="#444" stroke-width="1.6" opacity="0.52" stroke-dasharray="1.48 0.36 1.4 0.5 2.34 0.3 1.26 0.4 1.82 0.45"/><path d="M355.2 118.6h0.8" stroke="#888" stroke-width="1.4" opacity="0.6"/><rect x="338" y="122.3" width="2.4" height="2.2" fill="#6aa6e0" rx="0.5" opacity="0.85"/><path d="M341.8 123.4h9" stroke="#444" stroke-width="1.6" opacity="0.52" stroke-dasharray="1.62 0.39 1.05 0.28 1.89 0.38 2.19 0.55 1.84 0.38"/><path d="M355.2 123.4h0.8" stroke="#888" stroke-width="1.4" opacity="0.6"/><rect x="338" y="126.7" width="2.4" height="2.2" fill="#6a94c0" rx="0.5" opacity="0.85"/><path d="M341.8 127.8h6.4" stroke="#444" stroke-width="1.6" opacity="0.52" stroke-dasharray="2.47 0.36 2.35 0.51 2.04 0.45"/><path d="M355.2 127.8h0.8" stroke="#888" stroke-width="1.4" opacity="0.6"/><rect x="337" y="132.8" width="2.4" height="2.2" fill="#2f7fd6" rx="0.5" opacity="0.85"/><path d="M340.8 133.9h14.8" stroke="#444" stroke-width="1.6" opacity="0.52" stroke-dasharray="1.43 0.5 1.93 0.41 2.2 0.48 1.69 0.52 1.95 0.55 1.15 0.27 0.95 0.5 2.07 0.52"/><rect x="336" y="138.2" width="2.4" height="2.2" fill="#3f9fe0" rx="0.5" opacity="0.85"/><path d="M339.8 139.3h3" stroke="#444" stroke-width="1.6" opacity="0.52" stroke-dasharray="1.67 0.54 1.66 0.39"/><rect x="338" y="142.9" width="2.4" height="2.2" fill="#3fa0e0" rx="0.5" opacity="0.85"/><path d="M341.8 144h10" stroke="#444" stroke-width="1.6" opacity="0.52" stroke-dasharray="0.93 0.45 1.36 0.27 1.43 0.5 1.26 0.33 2 0.29 2.21 0.48"/><rect x="338" y="147.4" width="2.4" height="2.2" fill="#3f8fd8" rx="0.5" opacity="0.85"/><path d="M341.8 148.5h9.4" stroke="#444" stroke-width="1.6" opacity="0.52" stroke-dasharray="2.39 0.36 2.16 0.25 1.62 0.38 1.13 0.33 1.76 0.39"/><rect x="338" y="151.8" width="2.4" height="2.2" fill="#2b7fe0" rx="0.5" opacity="0.85"/><path d="M341.8 152.9h9.4" stroke="#444" stroke-width="1.6" opacity="0.52" stroke-dasharray="2.09 0.27 0.95 0.51 2.32 0.49 1.16 0.47 2.48 0.47"/><rect x="338" y="156.2" width="2.4" height="2.2" fill="#6aa6e0" rx="0.5" opacity="0.85"/><path d="M341.8 157.3h9.4" stroke="#444" stroke-width="1.6" opacity="0.52" stroke-dasharray="1.64 0.41 1.86 0.43 1.45 0.45 1.16 0.51 1.54 0.36"/><rect x="338" y="160.7" width="2.4" height="2.2" fill="#7f9fc0" rx="0.5" opacity="0.85"/><path d="M341.8 161.8h6" stroke="#444" stroke-width="1.6" opacity="0.52" stroke-dasharray="1.7 0.48 1.5 0.42 1.08 0.26 1.61 0.26"/><rect x="338" y="165.1" width="2.4" height="2.2" fill="#333" rx="0.5" opacity="0.85"/><path d="M341.8 166.2h4.2" stroke="#444" stroke-width="1.6" opacity="0.52" stroke-dasharray="1.95 0.3 1.62 0.33 1.53 0.44"/><rect x="338" y="169.6" width="2.4" height="2.2" fill="#3f8fe0" rx="0.5" opacity="0.85"/><path d="M341.8 170.7h7.4" stroke="#444" stroke-width="1.6" opacity="0.52" stroke-dasharray="1 0.26 1.26 0.46 2.31 0.36 1.44 0.33"/><rect x="338" y="174" width="2.4" height="2.2" fill="#555" rx="0.5" opacity="0.85"/><path d="M341.8 175.1h14.6" stroke="#444" stroke-width="1.6" opacity="0.52" stroke-dasharray="1.7 0.26 1.82 0.29 1.99 0.54 2.29 0.45 1.49 0.49 1.94 0.27 2.13 0.43"/><rect x="338" y="178.5" width="2.4" height="2.2" fill="#555" rx="0.5" opacity="0.85"/><path d="M341.8 179.6h13" stroke="#444" stroke-width="1.6" opacity="0.52" stroke-dasharray="2.13 0.53 1.12 0.53 1.01 0.54 1.17 0.44 1.31 0.3 2.34 0.48 1.98 0.28"/><rect x="338" y="182.6" width="2.4" height="2.2" fill="#555" rx="0.5" opacity="0.85"/><path d="M341.8 183.7h14.2" stroke="#444" stroke-width="1.6" opacity="0.52" stroke-dasharray="2.09 0.43 1.81 0.4 1.1 0.41 2.41 0.49 1.86 0.39 1.58 0.43 1.85 0.38"/><rect x="338" y="186.7" width="2.4" height="2.2" fill="#555" rx="0.5" opacity="0.85"/><path d="M341.8 187.8h14.6" stroke="#444" stroke-width="1.6" opacity="0.52" stroke-dasharray="2.25 0.42 2.2 0.48 2.29 0.49 1.06 0.34 1.13 0.34 0.97 0.54 2.44 0.43"/><rect x="337.4" y="192.4" width="2.4" height="2.2" fill="#777" rx="0.5" opacity="0.85"/><path d="M341.2 193.5h11" stroke="#444" stroke-width="1.6" opacity="0.52" stroke-dasharray="1.59 0.42 1.42 0.5 2.09 0.46 1.44 0.26 1.5 0.54 1.01 0.54"/><rect x="356.9" y="105.2" width="2" height="87" fill="#f0f0f0"/><rect x="357.2" y="107.6" width="1.4" height="53" fill="#c9c9c9"/><rect x="359.4" y="105" width="0.4" height="90" fill="#efefef"/><path d="M361.2 108.6h1.2" stroke="#888" stroke-width="1.2" opacity="0.6"/><path d="M364 108.6h27" stroke="#3a5a92" stroke-width="1.8" opacity="0.55" stroke-dasharray="1.06 0.44 2.39 0.41 2.25 0.44 2.34 0.51 0.96 0.36 2.03 0.35 1.79 0.45 2.29 0.32 1.7 0.33 2 0.26 1.51 0.27 2.33 0.45"/><rect x="393" y="108.5" width="220" height="0.4" fill="#ececec"/><rect x="365.8" y="111.6" width="38.2" height="11.2" fill="#f4f9fe" stroke="#bcd8f2" stroke-width="0.5"/><rect x="368.3" y="113.8" width="6.6" height="7.4" fill="#f5c84c" rx="0.6"/><rect x="368.3" y="113.2" width="3" height="1.4" fill="#e8b63c"/><rect x="369.7" y="117.2" width="6" height="4.4" fill="#2b8be6"/><path d="M376.9 114.6h10.6" stroke="#555" stroke-width="1.6" opacity="0.5" stroke-dasharray="1.62 0.34 2.02 0.38 2.01 0.29 1.54 0.39 1.65 0.33 1.98 0.27"/><path d="M376.9 117.6h1.8" stroke="#999" stroke-width="1.5" opacity="0.5"/><path d="M376.9 120.4h1.8" stroke="#999" stroke-width="1.5" opacity="0.5"/><rect x="409.6" y="113.8" width="6.6" height="7.4" fill="#f5c84c" rx="0.6"/><rect x="409.6" y="113.2" width="3" height="1.4" fill="#e8b63c"/><rect x="412.6" y="116.4" width="3.2" height="4.6" fill="#2b7fe0" rx="1.4"/><path d="M418.2 114.6h10.4" stroke="#555" stroke-width="1.6" opacity="0.5" stroke-dasharray="1.06 0.33 2.18 0.29 0.97 0.37 0.93 0.37 1.08 0.47 1.45 0.29 1.54 0.3"/><path d="M418.2 117.6h1.8" stroke="#999" stroke-width="1.5" opacity="0.5"/><path d="M418.2 120.4h1.8" stroke="#999" stroke-width="1.5" opacity="0.5"/><rect x="451.5" y="113.8" width="6.6" height="7.4" fill="#f5c84c" rx="0.6"/><rect x="451.5" y="113.2" width="3" height="1.4" fill="#e8b63c"/><rect x="454.1" y="115.8" width="3.8" height="5.2" fill="#e8eef6" stroke="#8fa8c8" stroke-width="0.5"/><path d="M460.1 114.6h10" stroke="#555" stroke-width="1.6" opacity="0.5" stroke-dasharray="1.11 0.44 0.96 0.53 1.6 0.34 1.85 0.3 2.34 0.4 1.47 0.46"/><path d="M460.1 117.6h1.8" stroke="#999" stroke-width="1.5" opacity="0.5"/><path d="M460.1 120.4h1.8" stroke="#999" stroke-width="1.5" opacity="0.5"/><rect x="492.7" y="113.8" width="6.6" height="7.4" fill="#f5c84c" rx="0.6"/><rect x="492.7" y="113.2" width="3" height="1.4" fill="#e8b63c"/><rect x="494.3" y="117.6" width="5" height="3.4" fill="#4f8fcf"/><path d="M501.3 114.6h7.4" stroke="#555" stroke-width="1.6" opacity="0.5" stroke-dasharray="1.84 0.54 1.43 0.5 2.01 0.55 1.21 0.32"/><path d="M501.3 117.6h1.8" stroke="#999" stroke-width="1.5" opacity="0.5"/><path d="M501.3 120.4h1.8" stroke="#999" stroke-width="1.5" opacity="0.5"/><path d="M333.6 196.2h9.4" stroke="#555" stroke-width="1.5" opacity="0.5" stroke-dasharray="2.27 0.44 1.19 0.38 2.02 0.43 1.04 0.29 1.35 0.34"/><rect x="611.6" y="195.2" width="2" height="2" fill="#9fb2c8" opacity="0.7"/><rect x="615" y="195.2" width="2" height="2" fill="#5f8fd0" opacity="0.8"/></svg></div><div class="th" id="np" style="left:25.8px;top:226.2px;width:290.2px;height:128.6px"><svg class="b" style="left:0;top:0" width="290.2" height="128.6" viewBox="25.8 226.2 290.2 128.6"><rect x="27.4" y="228.3" width="2.2" height="2.4" fill="#7fc4d6" rx="0.4"/><path d="M31.4 229.6h4.6" stroke="#999" stroke-width="1.5" opacity="0.5"/><path d="M37.4 229.6h0.8" stroke="#aaa" stroke-width="1" opacity="0.5"/><path d="M39.4 229.6h4.4" stroke="#999" stroke-width="1.5" opacity="0.5"/><path d="M28.3 234.4h7.4" stroke="#333" stroke-width="1.9" opacity="0.55" stroke-dasharray="1.93 0.32 2.15 0.38 1.77 0.33 1.35 0.45"/><path d="M38.8 234.4h6.8" stroke="#333" stroke-width="1.9" opacity="0.55" stroke-dasharray="1.53 0.3 0.92 0.42 1.24 0.53 2.29 0.49"/><path d="M48.2 234.4h7.2" stroke="#333" stroke-width="1.9" opacity="0.55" stroke-dasharray="1.27 0.28 1.89 0.4 1.06 0.39 2.37 0.37"/><path d="M58.4 234.4h7" stroke="#333" stroke-width="1.9" opacity="0.55" stroke-dasharray="1.72 0.44 1.8 0.28 1.19 0.39 1.45 0.32"/><path d="M68.4 234.4h8.6" stroke="#333" stroke-width="1.9" opacity="0.55" stroke-dasharray="2.07 0.49 1.65 0.27 1.81 0.27 1.25 0.44 1.25 0.26"/><rect x="25.8" y="350.6" width="290.2" height="4.2" fill="#f1f1f1"/><rect x="25.8" y="350.4" width="290.2" height="0.4" fill="#dcdcdc"/><path d="M238.4 352.7h4" stroke="#555" stroke-width="1.5" opacity="0.5" stroke-dasharray="1.38 0.28 2.4 0.33"/><path d="M243.6 352.7h3.4" stroke="#555" stroke-width="1.5" opacity="0.5" stroke-dasharray="2.05 0.31 1.11 0.44"/><path d="M264.4 352.7h4.6" stroke="#555" stroke-width="1.5" opacity="0.5" stroke-dasharray="1.61 0.44 1.68 0.43 1.51 0.55"/><path d="M273.4 352.7h15.6" stroke="#555" stroke-width="1.5" opacity="0.5" stroke-dasharray="0.98 0.52 2.26 0.52 2.25 0.52 1.9 0.43 1.99 0.47 2.25 0.46 1.99 0.43"/><path d="M295.2 352.7h5.4" stroke="#555" stroke-width="1.5" opacity="0.5" stroke-dasharray="2.4 0.26 1.28 0.37 2.44 0.55"/><rect x="233.6" y="351" width="0.35" height="3.6" fill="#d4d4d4"/><rect x="260.4" y="351" width="0.35" height="3.6" fill="#d4d4d4"/><rect x="270.2" y="351" width="0.35" height="3.6" fill="#d4d4d4"/><rect x="291.6" y="351" width="0.35" height="3.6" fill="#d4d4d4"/><rect x="313" y="232.4" width="3" height="118" fill="#f6f6f6"/></svg></div><div class="th" id="xl" style="left:333.2px;top:226.3px;width:290px;height:129.4px"><svg class="b" style="left:0;top:0" width="290" height="129.4" viewBox="333.2 226.3 290 129.4"><rect x="333.2" y="226.3" width="290" height="11.5" fill="#217346"/><rect x="337.2" y="228.2" width="2" height="2.2" fill="#fff" opacity="0.85"/><path d="M341.6 229.4h2.2" stroke="#fff" stroke-width="1.2" opacity="0.45"/><path d="M346 229.4h1.6" stroke="#fff" stroke-width="1.2" opacity="0.35"/><path d="M349.6 229.4h2.2" stroke="#fff" stroke-width="1.2" opacity="0.4"/><path d="M353.6 229.4h1" stroke="#fff" stroke-width="1.2" opacity="0.5"/><path d="M471.4 229.3h5.4" stroke="#fff" stroke-width="1.6" opacity="0.6"/><path d="M478.2 229.3h0.8" stroke="#fff" stroke-width="1" opacity="0.6"/><path d="M480.4 229.3h5.2" stroke="#fff" stroke-width="1.6" opacity="0.6"/><rect x="574.5" y="227.6" width="12.2" height="3.3" fill="#fff" rx="0.5"/><path d="M577 229.3h7.4" stroke="#217346" stroke-width="1.3" opacity="0.6" stroke-dasharray="2.01 0.26 1.44 0.52 2.01 0.35 1.43 0.5"/><path d="M591.4 229.3h2.4" stroke="#fff" stroke-width="1.6" opacity="0.7"/><rect x="597" y="227.2" width="8.4" height="4.2" fill="#185c37"/><path d="M599.4 229.3h2.4" stroke="#fff" stroke-width="0.8" opacity="0.7"/><path d="M609 229.3h2.2" stroke="#fff" stroke-width="1.4" opacity="0.55"/><path d="M617 229.3h2" stroke="#fff" stroke-width="1.4" opacity="0.55"/><path d="M335 235.2h7" stroke="#fff" stroke-width="1.7" opacity="0.7" stroke-dasharray="0.82 0.45 1.85 0.36 1.7 0.35 2.11 0.51"/><rect x="344.2" y="232.6" width="10" height="5.2" fill="#f3f3f3"/><path d="M346.2 235.2h6" stroke="#217346" stroke-width="1.7" opacity="0.7" stroke-dasharray="1.83 0.41 1.05 0.49 1.93 0.5"/><path d="M357 235.2h5" stroke="#fff" stroke-width="1.7" opacity="0.7" stroke-dasharray="1.61 0.38 1.55 0.5 2.08 0.27"/><path d="M366 235.2h15" stroke="#fff" stroke-width="1.7" opacity="0.7" stroke-dasharray="0.95 0.5 0.89 0.32 1.85 0.41 1.52 0.52 2.32 0.47 0.86 0.45 2.25 0.52 1.71 0.3"/><path d="M386 235.2h5" stroke="#fff" stroke-width="1.7" opacity="0.7" stroke-dasharray="1.17 0.34 2.36 0.48 1.83 0.48"/><path d="M395 235.2h5.2" stroke="#fff" stroke-width="1.7" opacity="0.7" stroke-dasharray="2.19 0.35 2.36 0.37"/><path d="M404.2 235.2h5" stroke="#fff" stroke-width="1.7" opacity="0.7" stroke-dasharray="1.34 0.28 1.84 0.53 2.1 0.42"/><path d="M413.2 235.2h5" stroke="#fff" stroke-width="1.7" opacity="0.7" stroke-dasharray="1.2 0.45 2.23 0.25 1.48 0.49"/><path d="M422 235.2h5.4" stroke="#fff" stroke-width="1.7" opacity="0.7" stroke-dasharray="1.63 0.42 0.89 0.48 1.87 0.38"/><path d="M433 235.2h10" stroke="#fff" stroke-width="1.7" opacity="0.7" stroke-dasharray="1.03 0.38 2.33 0.43 1.94 0.36 1.07 0.49 1.87 0.27"/><path d="M447.6 235.2h1.6" stroke="#fff" stroke-width="2" opacity="0.7"/><path d="M451.6 235.2h34" stroke="#fff" stroke-width="1.7" opacity="0.7" stroke-dasharray="2.39 0.27 1.82 0.53 2.52 0.43 2.03 0.51 2.44 0.43 2.01 0.48 1.72 0.27 1.25 0.43 1.59 0.26 2.54 0.5 2.18 0.41 1.68 0.38 1.93 0.36 2.25 0.3 2.12 0.36"/><path d="M608.6 235.2h1.8" stroke="#fff" stroke-width="1.8" opacity="0.7"/><path d="M611.8 235.2h5.6" stroke="#fff" stroke-width="1.7" opacity="0.75" stroke-dasharray="1.95 0.53 1.49 0.3 1.87 0.52"/><rect x="333.2" y="237.8" width="290" height="18.8" fill="#f3f3f3"/><rect x="333.2" y="256.4" width="290" height="0.4" fill="#d6d6d6"/><rect x="336" y="240.2" width="5.6" height="6.4" fill="#e9c46a" rx="0.8"/><rect x="337.4" y="239.4" width="2.8" height="1.6" fill="#8a8a8a" rx="0.5"/><rect x="338.6" y="242.6" width="3.6" height="4.4" fill="#fff" stroke="#aaa" stroke-width="0.3"/><path d="M334.6 249.2h8" stroke="#444" stroke-width="1.6" opacity="0.55" stroke-dasharray="1.09 0.45 1.8 0.48 1.08 0.44 1.28 0.3 0.9 0.49"/><path d="M338 251.6h1.2" stroke="#777" stroke-width="1" opacity="0.6"/><path d="M344.2 240.8h1.6" stroke="#666" stroke-width="1.6" opacity="0.7"/><path d="M346.6 240.8h8" stroke="#333" stroke-width="1.6" opacity="0.55" stroke-dasharray="1.86 0.55 2.01 0.35 2.06 0.35 2.4 0.42"/><path d="M344.2 244.7h1.6" stroke="#888" stroke-width="1.6" opacity="0.7"/><path d="M346.6 244.7h5.6" stroke="#999" stroke-width="1.6" opacity="0.55" stroke-dasharray="2.03 0.3 2.5 0.39 1.47 0.39"/><path d="M344.2 248.6h1.6" stroke="#c0504d" stroke-width="1.6" opacity="0.7"/><path d="M346.6 248.6h20" stroke="#444" stroke-width="1.6" opacity="0.55" stroke-dasharray="2.33 0.47 1.38 0.37 2.05 0.33 2.14 0.49 1.17 0.26 1.55 0.48 1.97 0.43 1.16 0.39 1.79 0.45 0.96 0.43"/><path d="M344.4 253.4h11.4" stroke="#555" stroke-width="1.6" opacity="0.55" stroke-dasharray="1.02 0.48 1.22 0.39 2.14 0.33 2.1 0.26 1.21 0.41 1.99 0.34"/><path d="M365.4 253.6h1" stroke="#888" stroke-width="1" opacity="0.5"/><rect x="366.6" y="239.4" width="0.35" height="16" fill="#dcdcdc"/><rect x="369.5" y="239.8" width="29.4" height="3.9" fill="#fff" stroke="#c6c6c6" stroke-width="0.35"/><path d="M371 241.8h10" stroke="#555" stroke-width="1.4" opacity="0.5" stroke-dasharray="2.09 0.4 1.07 0.33 1.05 0.29 2.22 0.4 1.85 0.55"/><path d="M396 241.8h1.2" stroke="#777" stroke-width="1" opacity="0.6"/><rect x="400" y="239.8" width="8.4" height="3.9" fill="#fff" stroke="#c6c6c6" stroke-width="0.35"/><path d="M401.4 241.8h2.4" stroke="#555" stroke-width="1.4" opacity="0.5"/><path d="M405.8 241.8h1.2" stroke="#777" stroke-width="1" opacity="0.6"/><path d="M409.6 241.8h2" stroke="#555" stroke-width="1.8" opacity="0.55"/><path d="M413.2 241.8h1.6" stroke="#555" stroke-width="1.5" opacity="0.55"/><path d="M372 248.6h1.6" stroke="#333" stroke-width="2" opacity="0.7"/><path d="M375.8 248.6h1.2" stroke="#333" stroke-width="2" opacity="0.6"/><path d="M379.4 248.6h1.8" stroke="#333" stroke-width="2" opacity="0.6"/><path d="M383 248.6h0.8" stroke="#999" stroke-width="1" opacity="0.6"/><rect x="386.4" y="247.2" width="3" height="2.8" fill="#fff" stroke="#999" stroke-width="0.35"/><path d="M390.6 248.6h0.8" stroke="#999" stroke-width="1" opacity="0.6"/><rect x="396" y="249.2" width="3" height="1.2" fill="#f4e21f"/><path d="M396.4 247.8h2" stroke="#777" stroke-width="1.4" opacity="0.6"/><path d="M400.2 248.6h0.8" stroke="#999" stroke-width="1" opacity="0.6"/><rect x="402.4" y="249.2" width="3" height="1.2" fill="#e0281f"/><path d="M403 247.6h1.6" stroke="#c0281f" stroke-width="1.8" opacity="0.8"/><path d="M406.6 248.6h0.8" stroke="#999" stroke-width="1" opacity="0.6"/><path d="M410 248.6h2.2" stroke="#555" stroke-width="1.8" opacity="0.5"/><path d="M413 248.6h0.8" stroke="#999" stroke-width="1" opacity="0.6"/><path d="M389.2 253.4h6" stroke="#555" stroke-width="1.6" opacity="0.55" stroke-dasharray="1.6 0.32 1.47 0.54 2.41 0.45"/><path d="M415 253.6h1" stroke="#888" stroke-width="1" opacity="0.5"/><rect x="416.4" y="239.4" width="0.35" height="16" fill="#dcdcdc"/><path d="M419 241.8h2.4" stroke="#555" stroke-width="1.8" opacity="0.5" stroke-dasharray="0.44 0.55 0.4 0.27 0.49 0.5"/><path d="M419 248.6h2.4" stroke="#555" stroke-width="1.8" opacity="0.5" stroke-dasharray="0.59 0.29 0.59 0.45 0.6 0.42"/><path d="M423 241.8h2.4" stroke="#555" stroke-width="1.8" opacity="0.5" stroke-dasharray="0.59 0.4 0.47 0.41 0.6 0.44"/><path d="M423 248.6h2.4" stroke="#555" stroke-width="1.8" opacity="0.5" stroke-dasharray="0.57 0.5 0.32 0.32 0.25 0.54"/><path d="M427 241.8h2.4" stroke="#555" stroke-width="1.8" opacity="0.5" stroke-dasharray="0.31 0.44 0.42 0.41 0.39 0.33 0.61 0.26"/><path d="M427 248.6h2.4" stroke="#555" stroke-width="1.8" opacity="0.5" stroke-dasharray="0.6 0.26 0.41 0.34 0.37 0.35 0.45 0.36"/><path d="M432.6 241.8h2.4" stroke="#666" stroke-width="1.8" opacity="0.5"/><path d="M435.6 241.8h0.8" stroke="#999" stroke-width="1" opacity="0.6"/><path d="M432 248.6h2.2" stroke="#666" stroke-width="1.8" opacity="0.5"/><path d="M435.8 248.6h2.2" stroke="#666" stroke-width="1.8" opacity="0.5"/><path d="M440.4 241.8h1.8" stroke="#555" stroke-width="1.8" opacity="0.6"/><path d="M443 241.8h26" stroke="#333" stroke-width="1.6" opacity="0.55" stroke-dasharray="1.62 0.49 2.06 0.35 1.59 0.4 2.09 0.32 1.05 0.54 2.52 0.47 1.2 0.34 2.27 0.35 2.33 0.32 1.5 0.4 1.04 0.31 2.1 0.45"/><path d="M440.4 248.6h1.8" stroke="#555" stroke-width="1.8" opacity="0.6"/><path d="M443 248.6h23" stroke="#333" stroke-width="1.6" opacity="0.55" stroke-dasharray="1.17 0.31 2.28 0.35 1.2 0.41 1.37 0.54 1.99 0.46 2.31 0.54 2.54 0.36 1.64 0.52 1.92 0.49 2.45 0.4"/><path d="M467.6 248.6h0.8" stroke="#999" stroke-width="1" opacity="0.6"/><path d="M441.4 253.4h4.4" stroke="#444" stroke-width="1.6" opacity="0.6"/><path d="M471 253.6h1" stroke="#888" stroke-width="1" opacity="0.5"/><rect x="472.4" y="239.4" width="0.35" height="16" fill="#dcdcdc"/><rect x="474.6" y="239.8" width="24" height="3.9" fill="#fff" stroke="#c6c6c6" stroke-width="0.35"/><path d="M476 241.8h4.4" stroke="#555" stroke-width="1.4" opacity="0.55"/><path d="M496 241.8h1.2" stroke="#777" stroke-width="1" opacity="0.6"/><rect x="475" y="247.2" width="2.6" height="2.6" fill="#7fb2d8" opacity="0.7"/><path d="M478.6 248.6h0.8" stroke="#999" stroke-width="1" opacity="0.6"/><path d="M481 248.6h1.8" stroke="#555" stroke-width="1.8" opacity="0.55"/><path d="M484.6 248.6h1.2" stroke="#555" stroke-width="1.8" opacity="0.55"/><path d="M489.4 248.6h3" stroke="#555" stroke-width="1.6" opacity="0.5" stroke-dasharray="0.63 0.32 0.8 0.28 1 0.3"/><path d="M494 248.6h3" stroke="#555" stroke-width="1.6" opacity="0.5" stroke-dasharray="1.24 0.55 1.14 0.29"/><path d="M483 253.4h4.4" stroke="#444" stroke-width="1.6" opacity="0.6"/><path d="M498.4 253.6h1" stroke="#888" stroke-width="1" opacity="0.5"/><rect x="499.8" y="239.4" width="0.35" height="16" fill="#dcdcdc"/><rect x="503" y="239.6" width="5.2" height="4.8" fill="#fff" stroke="#9ab" stroke-width="0.35"/><rect x="503.8" y="240.2" width="2" height="1.4" fill="#d8413a"/><rect x="503.8" y="242" width="3.4" height="1.2" fill="#4a90d8" opacity="0.8"/><path d="M501.4 246.8h8.6" stroke="#444" stroke-width="1.5" opacity="0.55" stroke-dasharray="1.89 0.43 1.6 0.44 2.04 0.46 1.47 0.3"/><path d="M502.6 249.4h6" stroke="#444" stroke-width="1.5" opacity="0.55" stroke-dasharray="1.68 0.34 2.21 0.39 1.85 0.26"/><rect x="514.2" y="239.6" width="5.6" height="4.8" fill="#d9e8f6" stroke="#6fa0d0" stroke-width="0.35"/><rect x="517" y="241.4" width="3.4" height="3.4" fill="#7fb0e0" rx="1.7" opacity="0.8"/><path d="M512.4 246.8h9" stroke="#444" stroke-width="1.5" opacity="0.5" stroke-dasharray="1.14 0.4 1.82 0.28 1.53 0.46 1.61 0.3 0.91 0.51 2.1 0.54"/><path d="M512.8 249.4h8.4" stroke="#444" stroke-width="1.5" opacity="0.45" stroke-dasharray="1.3 0.44 1.66 0.27 2.31 0.26 2.13 0.41"/><rect x="525.2" y="239.6" width="5.6" height="4.8" fill="#eef4fa" stroke="#9ab8d8" stroke-width="0.35"/><rect x="527.6" y="241.2" width="3.2" height="3.4" fill="#9fc4e8" rx="1.6" opacity="0.8"/><path d="M525.4 246.8h5" stroke="#444" stroke-width="1.5" opacity="0.45" stroke-dasharray="1.25 0.52 1.78 0.28 1.36 0.38"/><path d="M524.2 249.4h7.4" stroke="#444" stroke-width="1.5" opacity="0.35" stroke-dasharray="1.32 0.39 2.47 0.45 1.41 0.41 1.88 0.53"/><path d="M513.4 253.4h6.4" stroke="#555" stroke-width="1.6" opacity="0.5" stroke-dasharray="2.37 0.3 1.78 0.34 1.08 0.42 2.44 0.28"/><rect x="533.6" y="239.4" width="0.35" height="16" fill="#dcdcdc"/><rect x="537" y="240" width="4.4" height="4" fill="#dbe9f6" stroke="#7fa8d0" stroke-width="0.35"/><path d="M536.8 246.8h4.4" stroke="#444" stroke-width="1.6" opacity="0.6"/><rect x="545" y="240" width="4.4" height="4" fill="#f3dcdc" stroke="#c88" stroke-width="0.35"/><path d="M546 240.4l2.8 2.6m0 -2.6l-2.8 2.6" fill="none" stroke="#d8413a" stroke-width="0.6"/><path d="M544.8 246.8h4.4" stroke="#444" stroke-width="1.6" opacity="0.6"/><rect x="552.4" y="239.8" width="4" height="4.4" fill="#fff" stroke="#4a78b8" stroke-width="0.45"/><rect x="553.4" y="241" width="2" height="2" fill="#4a90d8" opacity="0.7"/><path d="M552.2 246.8h4.4" stroke="#444" stroke-width="1.6" opacity="0.6"/><path d="M545.2 253.4h3.4" stroke="#555" stroke-width="1.6" opacity="0.55"/><rect x="559" y="239.4" width="0.35" height="16" fill="#dcdcdc"/><path d="M561.4 240.8h1.6" stroke="#3a6fb8" stroke-width="2" opacity="0.7"/><path d="M564 240.8h9" stroke="#444" stroke-width="1.5" opacity="0.55" stroke-dasharray="1.72 0.44 2.38 0.48 2 0.54 1.13 0.46"/><path d="M574.6 240.8h0.8" stroke="#999" stroke-width="1" opacity="0.6"/><path d="M561.4 244.8h1.6" stroke="#3a6fb8" stroke-width="2" opacity="0.6"/><path d="M564 244.8h4.6" stroke="#666" stroke-width="1.5" opacity="0.45"/><path d="M561.4 249h1.6" stroke="#d8607a" stroke-width="1.8" opacity="0.7"/><path d="M564 249h5" stroke="#888" stroke-width="1.5" opacity="0.4"/><rect x="582.6" y="239.8" width="2" height="4.6" fill="#4a78c8" opacity="0.8"/><path d="M585 241.4h2.4" stroke="#555" stroke-width="1.8" opacity="0.6"/><rect x="585.4" y="243" width="1.6" height="1.4" fill="#333"/><path d="M580.6 246.8h8" stroke="#444" stroke-width="1.5" opacity="0.55" stroke-dasharray="1.11 0.49 2.28 0.37 1.35 0.52 1.11 0.3 1.15 0.53"/><path d="M581.4 249.4h6.4" stroke="#444" stroke-width="1.5" opacity="0.45" stroke-dasharray="1.37 0.41 1.16 0.44 1 0.33 2.41 0.41"/><circle cx="594.2" cy="241.6" r="2" fill="none" stroke="#4a88c8" stroke-width="0.6"/><path d="M592.8 243.2l-1.6 1.8" fill="none" stroke="#4a88c8" stroke-width="0.7"/><path d="M591.2 246.8h5.6" stroke="#444" stroke-width="1.5" opacity="0.55" stroke-dasharray="1.63 0.39 0.9 0.49 1.38 0.44 1.61 0.38"/><path d="M591.6 249.4h5" stroke="#444" stroke-width="1.5" opacity="0.5" stroke-dasharray="1.53 0.31 1.62 0.55 1.52 0.51"/><path d="M577 253.4h4.4" stroke="#444" stroke-width="1.6" opacity="0.6"/><rect x="600.4" y="239.4" width="0.35" height="16" fill="#dcdcdc"/><path d="M618.6 253.6h1.6" stroke="#777" stroke-width="1" opacity="0.6"/><rect x="333.2" y="256.8" width="290" height="6.4" fill="#fff"/><rect x="333.2" y="256.8" width="290" height="0.9" fill="#ededed"/><rect x="334.4" y="258.2" width="18" height="4" fill="#fff" stroke="#dadada" stroke-width="0.35"/><path d="M336 260.2h2.4" stroke="#999" stroke-width="1.2" opacity="0.5"/><path d="M350 260.2h1" stroke="#999" stroke-width="1" opacity="0.6"/><path d="M354.6 260.2h0.6" stroke="#aaa" stroke-width="2.4" opacity="0.6"/><rect x="357.4" y="258.2" width="20.6" height="4" fill="#fff" stroke="#dadada" stroke-width="0.35"/><path d="M361 260.2h1.6" stroke="#bbb" stroke-width="1.4" opacity="0.6"/><path d="M366 260.2h1.8" stroke="#bbb" stroke-width="1.4" opacity="0.6"/><path d="M371.2 260.2h2.4" stroke="#555" stroke-width="1.6" opacity="0.6"/><rect x="379.6" y="258.2" width="236" height="4" fill="#fff" stroke="#e2e2e2" stroke-width="0.35"/><path d="M618.6 260.2h1.4" stroke="#999" stroke-width="1" opacity="0.6"/><rect x="333.2" y="263.2" width="290" height="4.4" fill="#e9e9e9"/><rect x="333.2" y="267.6" width="4.9" height="78.6" fill="#e9e9e9"/><path d="M337.4 264.2v2.8h-2.8z" fill="#b4b4b4"/><path d="M338.1 263.4V346.2M351.33 263.4V346.2M364.56 263.4V346.2M377.79 263.4V346.2M391.02 263.4V346.2M404.25 263.4V346.2M417.48 263.4V346.2M430.71 263.4V346.2M443.94 263.4V346.2M457.17 263.4V346.2M470.4 263.4V346.2M483.63 263.4V346.2M496.86 263.4V346.2M510.09 263.4V346.2M523.32 263.4V346.2M536.55 263.4V346.2M549.78 263.4V346.2M563.01 263.4V346.2M576.24 263.4V346.2M589.47 263.4V346.2M602.7 263.4V346.2M615.93 263.4V346.2M333.2 267.6H617.8M333.2 272.07H617.8M333.2 276.54H617.8M333.2 281.01H617.8M333.2 285.48H617.8M333.2 289.95H617.8M333.2 294.42H617.8M333.2 298.89H617.8M333.2 303.36H617.8M333.2 307.83H617.8M333.2 312.3H617.8M333.2 316.77H617.8M333.2 321.24H617.8M333.2 325.71H617.8M333.2 330.18H617.8M333.2 334.65H617.8M333.2 339.12H617.8M333.2 343.59H617.8" fill="none" stroke="#dcdcdc" stroke-width="0.28"/><path d="M343.8 265.5h1.7" stroke="#555" stroke-width="1.9" opacity="0.42"/><path d="M357.03 265.5h1.7" stroke="#555" stroke-width="1.9" opacity="0.42"/><path d="M370.26 265.5h1.7" stroke="#555" stroke-width="1.9" opacity="0.42"/><path d="M383.49 265.5h1.7" stroke="#555" stroke-width="1.9" opacity="0.42"/><path d="M396.72 265.5h1.7" stroke="#555" stroke-width="1.9" opacity="0.42"/><path d="M409.95 265.5h1.7" stroke="#555" stroke-width="1.9" opacity="0.42"/><path d="M423.18 265.5h1.7" stroke="#555" stroke-width="1.9" opacity="0.42"/><path d="M436.41 265.5h1.7" stroke="#555" stroke-width="1.9" opacity="0.42"/><path d="M449.64 265.5h1.7" stroke="#555" stroke-width="1.9" opacity="0.42"/><path d="M462.87 265.5h1.7" stroke="#555" stroke-width="1.9" opacity="0.42"/><path d="M476.1 265.5h1.7" stroke="#555" stroke-width="1.9" opacity="0.42"/><path d="M489.33 265.5h1.7" stroke="#555" stroke-width="1.9" opacity="0.42"/><path d="M502.56 265.5h1.7" stroke="#555" stroke-width="1.9" opacity="0.42"/><path d="M515.79 265.5h1.7" stroke="#555" stroke-width="1.9" opacity="0.42"/><path d="M529.02 265.5h1.7" stroke="#555" stroke-width="1.9" opacity="0.42"/><path d="M542.25 265.5h1.7" stroke="#555" stroke-width="1.9" opacity="0.42"/><path d="M555.48 265.5h1.7" stroke="#555" stroke-width="1.9" opacity="0.42"/><path d="M568.71 265.5h1.7" stroke="#555" stroke-width="1.9" opacity="0.42"/><path d="M581.94 265.5h1.7" stroke="#555" stroke-width="1.9" opacity="0.42"/><path d="M595.17 265.5h1.7" stroke="#555" stroke-width="1.9" opacity="0.42"/><path d="M608.4 265.5h1.7" stroke="#555" stroke-width="1.9" opacity="0.42"/><path d="M335.6 269.9h1.6" stroke="#555" stroke-width="1.7" opacity="0.38"/><path d="M335.6 274.37h1.6" stroke="#555" stroke-width="1.7" opacity="0.38"/><path d="M335.6 278.84h1.6" stroke="#555" stroke-width="1.7" opacity="0.38"/><path d="M335.6 283.31h1.6" stroke="#555" stroke-width="1.7" opacity="0.38"/><path d="M335.6 287.78h1.6" stroke="#555" stroke-width="1.7" opacity="0.38"/><path d="M335.6 292.25h1.6" stroke="#555" stroke-width="1.7" opacity="0.38"/><path d="M335.6 296.72h1.6" stroke="#555" stroke-width="1.7" opacity="0.38"/><path d="M335.6 301.19h1.6" stroke="#555" stroke-width="1.7" opacity="0.38"/><path d="M335.6 305.66h1.6" stroke="#555" stroke-width="1.7" opacity="0.38"/><path d="M334.6 310.13h2.4" stroke="#555" stroke-width="1.7" opacity="0.38"/><path d="M334.6 314.6h2.4" stroke="#555" stroke-width="1.7" opacity="0.38"/><path d="M334.6 319.07h2.4" stroke="#555" stroke-width="1.7" opacity="0.38"/><path d="M334.6 323.54h2.4" stroke="#555" stroke-width="1.7" opacity="0.38"/><path d="M334.6 328.01h2.4" stroke="#555" stroke-width="1.7" opacity="0.38"/><path d="M334.6 332.48h2.4" stroke="#555" stroke-width="1.7" opacity="0.38"/><path d="M334.6 336.95h2.4" stroke="#555" stroke-width="1.7" opacity="0.38"/><path d="M334.6 341.42h2.4" stroke="#555" stroke-width="1.7" opacity="0.38"/><rect x="617.8" y="263.2" width="5.4" height="83" fill="#f0f0f0"/><rect x="618.6" y="268" width="3.6" height="52" fill="#fff" stroke="#c4c4c4" stroke-width="0.3"/><path d="M619.6 265.4h1.4" stroke="#888" stroke-width="1" opacity="0.6"/><path d="M619.6 344h1.4" stroke="#888" stroke-width="1" opacity="0.6"/><rect x="333.2" y="346.2" width="290" height="5" fill="#e6e6e6"/><rect x="352" y="346.2" width="12.6" height="4.6" fill="#fff"/><rect x="352" y="350.4" width="12.6" height="0.7" fill="#217346"/><path d="M354.6 348.4h7.4" stroke="#217346" stroke-width="1.5" opacity="0.7" stroke-dasharray="2.16 0.25 2.49 0.43 1.61 0.33 1.85 0.53"/><circle cx="372.4" cy="348.6" r="1.5" fill="none" stroke="#999" stroke-width="0.35"/><path d="M371.6 348.6h1.6" stroke="#777" stroke-width="0.5" opacity="0.8"/><path d="M337 348.6h1.4" stroke="#aaa" stroke-width="1" opacity="0.6"/><path d="M342.6 348.6h1.4" stroke="#aaa" stroke-width="1" opacity="0.6"/><path d="M507 348.6h0.5" stroke="#999" stroke-width="2" opacity="0.6"/><rect x="511.7" y="347" width="104" height="3.2" fill="#fff" rx="0.3" stroke="#c4c4c4" stroke-width="0.3"/><path d="M509 348.6h1.2" stroke="#888" stroke-width="1" opacity="0.6"/><path d="M616.8 348.6h1.2" stroke="#888" stroke-width="1" opacity="0.6"/><rect x="333.2" y="351.2" width="290" height="4.6" fill="#f3f3f3"/><path d="M334.8 353.5h8" stroke="#333" stroke-width="1.6" opacity="0.6" stroke-dasharray="0.92 0.4 1.4 0.33 2.37 0.53 1.73 0.38"/><rect x="566.6" y="351.6" width="7.6" height="3.8" fill="#cfcfcf"/><path d="M568.8 353.5h3.2" stroke="#444" stroke-width="2" opacity="0.7" stroke-dasharray="0.53 0.35 0.43 0.55 0.99 0.36 0.84 0.34"/><path d="M578.4 353.5h2.8" stroke="#666" stroke-width="2" opacity="0.6" stroke-dasharray="0.97 0.35 0.84 0.38 0.77 0.37"/><path d="M586 353.5h2.8" stroke="#666" stroke-width="2" opacity="0.6" stroke-dasharray="0.42 0.28 0.48 0.54 0.5 0.29 0.4 0.28"/><path d="M591.8 353.5h1.2" stroke="#666" stroke-width="0.5" opacity="0.8"/><rect x="593.8" y="353.3" width="15" height="0.4" fill="#888"/><rect x="601" y="352.4" width="0.7" height="2.2" fill="#555"/><path d="M609.8 353.5h1.2" stroke="#666" stroke-width="1.2" opacity="0.6"/><path d="M613.2 353.5h7" stroke="#444" stroke-width="1.6" opacity="0.55" stroke-dasharray="2.26 0.52 1.64 0.45 1.85 0.47"/></svg></div><div class="th" id="ch" style="left:25.8px;top:382.5px;width:290px;height:128.8px"><svg class="b" style="left:0;top:0" width="290" height="128.8" viewBox="25.8 382.5 290 128.8"><rect x="25.8" y="382.5" width="290" height="7.2" fill="#dee1e6"/><path d="M27.6 389.7V385.2Q27.6 384 28.8 384H71.2Q72.4 384 72.4 385.2V389.7Z" fill="#fff"/><circle cx="30.7" cy="387" r="1.15" fill="#5f6368"/><path d="M33.8 387h8.4" stroke="#555" stroke-width="1.5" opacity="0.5" stroke-dasharray="1.38 0.55 2.28 0.51 1.97 0.33 2.23 0.31"/><path d="M68.4 386.3l1.4 1.4m0 -1.4l-1.4 1.4" fill="none" stroke="#555" stroke-width="0.4"/><path d="M75.2 387h1.8m-.9 -.9v1.8" fill="none" stroke="#555" stroke-width="0.45"/><path d="M284.7 386.4h1.6" stroke="#9aa0a6" stroke-width="0.5" opacity="0.8"/><path d="M293.8 386.4h1.6" stroke="#9aa0a6" stroke-width="0.5" opacity="0.8"/><path d="M302.2 386.4h1.6" stroke="#9aa0a6" stroke-width="0.5" opacity="0.8"/><path d="M310.4 386.4h1.6" stroke="#9aa0a6" stroke-width="0.5" opacity="0.8"/><path d="M29 393.8h2" stroke="#bbb" stroke-width="1.3" opacity="0.7"/><path d="M35.6 393.8h2" stroke="#ccc" stroke-width="1.3" opacity="0.7"/><circle cx="42" cy="393.8" r="1.2" fill="none" stroke="#4a4e52" stroke-width="0.5"/><path d="M46 394.2l1.5 -1.5l1.5 1.5v1.4h-3z" fill="#55595d"/><rect x="51.8" y="391.2" width="230.8" height="5.2" fill="#f1f3f4" rx="2.6"/><circle cx="55" cy="393.8" r="0.8" fill="none" stroke="#777" stroke-width="0.35"/><path d="M57.4 393.8h47.6" stroke="#666" stroke-width="1.6" opacity="0.5" stroke-dasharray="1.09 0.5 1.03 0.32 2.15 0.41 1.76 0.52 2.68 0.47 0.99 0.45 2.6 0.52 1.98 0.3 1.82 0.28 2.19 0.34 2.53 0.26 1.78 0.37 1.77 0.47 2.29 0.25 1.84 0.51 1.06 0.52 1.31 0.43 1.64 0.27 2.46 0.25 2.67 0.26"/><path d="M271.8 393.8h2" stroke="#666" stroke-width="1.5" opacity="0.6"/><path d="M277.8 393.8h2" stroke="#666" stroke-width="1.5" opacity="0.6"/><rect x="285.4" y="392.7" width="2.2" height="2.2" fill="#222" rx="0.4"/><rect x="291" y="392.7" width="2.2" height="2.2" fill="#444" rx="0.3"/><circle cx="298.2" cy="393.8" r="1.2" fill="#333"/><rect x="302.7" y="391.3" width="11.5" height="5" fill="#fff" rx="2.5" stroke="#e07a72" stroke-width="0.5"/><path d="M304.6 393.8h5" stroke="#d93025" stroke-width="1.6" opacity="0.8" stroke-dasharray="2.5 0.55 1.71 0.37"/><path d="M311.2 393.8h0.5" stroke="#d93025" stroke-width="1.8" opacity="0.6"/><rect x="29.2" y="399.8" width="1.8" height="2.2" fill="#4285f4" opacity="0.8"/><path d="M33 401h4.4" stroke="#555" stroke-width="1.5" opacity="0.5"/><path d="M43.6 400.2h2.2l-1.1 1.6z" fill="#e03a3a"/><path d="M47.6 401h13.4" stroke="#555" stroke-width="1.5" opacity="0.5" stroke-dasharray="2.07 0.27 1.32 0.51 1.67 0.36 2 0.32 1.85 0.4 2.56 0.38"/><rect x="65.2" y="400" width="3.4" height="2.2" fill="#f00" rx="0.7"/><path d="M70 401h17" stroke="#555" stroke-width="1.5" opacity="0.5" stroke-dasharray="1.27 0.35 1.28 0.47 1.62 0.37 2.25 0.31 1.9 0.29 1.27 0.51 1.67 0.37 1.88 0.53 1.44 0.4"/><circle cx="30.5" cy="408.3" r="1.5" fill="#e8a33a"/><circle cx="30.5" cy="408.3" r="0.6" fill="#4285f4"/><path d="M35.7 408.3h60" stroke="#3c4043" stroke-width="1.7" opacity="0.55" stroke-dasharray="2.62 0.26 2.77 0.51 2 0.43 1.69 0.45 1.77 0.54 1.66 0.3 1.92 0.41 1.1 0.4 2.48 0.29 1.18 0.26 1.52 0.26 2.45 0.48 2.6 0.25 1.96 0.53 2.44 0.4 2.7 0.33 1.48 0.49 1.37 0.48 1.33 0.26 1.92 0.26"/><rect x="99" y="405.6" width="23.4" height="5.4" fill="#1a73e8" rx="0.7"/><path d="M101.6 408.3h18.2" stroke="#fff" stroke-width="1.6" opacity="0.8" stroke-dasharray="1.29 0.43 2.29 0.51 1.27 0.39 1.05 0.31 1.65 0.37 2.19 0.41 1.82 0.49 2.48 0.33 2.06 0.44"/><path d="M310.4 407.6l1.4 1.4m0 -1.4l-1.4 1.4" fill="none" stroke="#555" stroke-width="0.4"/><rect x="25.8" y="412.7" width="290" height="0.45" fill="#d6d8db"/><text x="145.6" y="455.8" font-family="Liberation Sans, sans-serif" font-size="17.2" stroke-width=".45" textLength="50.4" lengthAdjust="spacingAndGlyphs" letter-spacing="-.4"><tspan fill="#4285f4" stroke="#4285f4">G</tspan><tspan fill="#ea4335" stroke="#ea4335">o</tspan><tspan fill="#fbbc05" stroke="#fbbc05">o</tspan><tspan fill="#4285f4" stroke="#4285f4">g</tspan><tspan fill="#34a853" stroke="#34a853">l</tspan><tspan fill="#ea4335" stroke="#ea4335">e</tspan></text><rect x="119" y="467.2" width="104.4" height="8.4" fill="#fff" rx="4.2" stroke="#dfe1e5" stroke-width="0.45"/><circle cx="123.6" cy="471.4" r="0.9" fill="none" stroke="#777" stroke-width="0.4"/><path d="M124.2 472l.8 .8" fill="none" stroke="#777" stroke-width="0.4"/><path d="M128 471.4h45" stroke="#777" stroke-width="1.6" opacity="0.5" stroke-dasharray="1.58 0.29 2.58 0.43 1.63 0.3 2.75 0.48 1.47 0.38 2.18 0.42 1.06 0.27 1.58 0.51 2.3 0.44 1.31 0.39 2.72 0.31 2.65 0.41 2.58 0.32 1.86 0.31 2.36 0.29 1.45 0.26 1.59 0.34 1.43 0.42 1.68 0.32 1.63 0.34"/><rect x="209.2" y="470.2" width="1" height="2.4" fill="#4285f4" rx="0.5"/><circle cx="216.6" cy="471.4" r="1.2" fill="none" stroke="#4285f4" stroke-width="0.55"/><circle cx="160.7" cy="486" r="3.6" fill="#f1f3f4"/><path d="M159.6 487.2l2.2 -2.2" fill="none" stroke="#d9622b" stroke-width="0.9"/><circle cx="160" cy="486.9" r="0.6" fill="#444"/><circle cx="181" cy="486" r="3.6" fill="#f1f3f4"/><path d="M179.8 486h2.4m-1.2 -1.2v2.4" fill="none" stroke="#333" stroke-width="0.5"/><path d="M153.6 494.7h14.2" stroke="#444" stroke-width="1.5" opacity="0.5" stroke-dasharray="1.15 0.53 1.23 0.51 1.93 0.55 2.25 0.34 2.11 0.49 2.23 0.46 1.8 0.45"/><path d="M173.4 494.7h15.4" stroke="#444" stroke-width="1.5" opacity="0.5" stroke-dasharray="1.26 0.48 1.02 0.32 2.01 0.32 1.24 0.36 2.2 0.29 2.31 0.52 2.25 0.47 2.37 0.54"/><rect x="278" y="502" width="34" height="5.2" fill="#fff" rx="2.6" stroke="#e3e5e8" stroke-width="0.4"/><path d="M280.2 504.6h1.4" stroke="#1a73e8" stroke-width="1.4" opacity="0.8"/><path d="M283 504.6h26" stroke="#1a73e8" stroke-width="1.5" opacity="0.5" stroke-dasharray="1.64 0.32 1.75 0.3 1.02 0.31 2.62 0.42 1.63 0.32 2.46 0.34 2.59 0.26 2.11 0.26 2.54 0.45 1.45 0.34 2.13 0.32 1.87 0.49"/></svg></div><div class="th" id="cc" style="left:334px;top:382.3px;width:287.7px;height:129px"><svg class="b" style="left:0;top:0" width="287.7" height="129" viewBox="334 382.3 287.7 129"><rect x="336.8" y="384.2" width="1.4" height="2.4" fill="#d8362c" rx="0.5"/><path d="M340 385.4h29" stroke="#aaa" stroke-width="1.5" opacity="0.5" stroke-dasharray="1.58 0.54 1.07 0.38 2.49 0.26 1.68 0.5 1.9 0.49 2.47 0.45 1.4 0.52 1.63 0.53 1.69 0.55 1.18 0.52 1.47 0.31 1.29 0.47 2.59 0.48 1.07 0.5"/><rect x="334" y="388.4" width="287.7" height="10.5" fill="#4a4a4a"/><g transform="translate(339.3,389.2) scale(.088)"><defs><linearGradient id="c1" x1="0" y1="0" x2="0" y2="1"><stop offset="0" stop-color="#f4553c"/><stop offset=".5" stop-color="#e8342a"/><stop offset="1" stop-color="#e02222"/></linearGradient></defs><path d="M92 24A43 45 0 1 0 92 80L73 64A19 20 0 1 1 73 40Z" fill="url(#c1)"/><path d="M58 6L61 30" stroke="#fbd0c0" stroke-width="3" opacity=".7"/><path d="M34 34L52 46L42 64L26 52Z" fill="#2f6fd0"/><path d="M26 48L48 64L34 94Q14 100 0 86Q-4 68 8 58Z" fill="#f8dca6"/><path d="M8 60L26 50L30 58L6 72Z" fill="#fdeecb"/></g><path d="M352.7 391.9h35.6" stroke="#fff" stroke-width="2.2" opacity="0.85" stroke-dasharray="2.56 0.43 1.17 0.46 1.95 0.46 1.85 0.42 1.54 0.36 2.81 0.49 2.23 0.34 1.78 0.27 1.73 0.54 1.77 0.31 1.57 0.26 1.51 0.49 2.75 0.36 1.47 0.26 2.38 0.45 1.09 0.31"/><path d="M352.7 395.3h18.4" stroke="#bbb" stroke-width="1.4" opacity="0.5" stroke-dasharray="1.06 0.34 1.45 0.3 1.06 0.43 2.14 0.37 1.66 0.53 0.96 0.45 1.75 0.49 2.19 0.5 1.3 0.5 1.09 0.53"/><rect x="568" y="390.2" width="18" height="6.6" fill="none" rx="0.3" stroke="#fff" stroke-width="0.6"/><circle cx="572.6" cy="393.5" r="1.7" fill="#fff"/><path d="M576.6 393.5h6" stroke="#fff" stroke-width="1.5" opacity="0.7" stroke-dasharray="2.16 0.29 1.68 0.34 2.47 0.43"/><rect x="590" y="390" width="27" height="7" fill="#fff" rx="0.4"/><circle cx="595.6" cy="393.5" r="1.9" fill="none" stroke="#2a6fd6" stroke-width="0.6"/><circle cx="595.6" cy="393" r="0.6" fill="#2a6fd6"/><path d="M600.4 393.5h13" stroke="#2a6fd6" stroke-width="1.5" opacity="0.7" stroke-dasharray="1.58 0.43 2.44 0.42 1.05 0.36 2.17 0.3 1.69 0.49 2.5 0.45"/><rect x="334" y="398.9" width="19.7" height="112.5" fill="#4a4a4a"/><rect x="334" y="412.7" width="19.7" height="13.3" fill="#2d6fdb"/><path d="M343.9 405.6l-2.2 -2.2a1.2 1.2 0 0 1 2.2 -1.2a1.2 1.2 0 0 1 2.2 1.2z" fill="#fff"/><path d="M338.4 408.2h11.4" stroke="#ccc" stroke-width="1.5" opacity="0.55" stroke-dasharray="1.55 0.37 2.08 0.39 1.15 0.52 1.5 0.45 1.29 0.4 1.84 0.42"/><path d="M341.8 419.4l1.6 -3.4l2.6 1.2l-1.8 3z" fill="#fff"/><path d="M344.2 415l1.4 -1.6" fill="none" stroke="#fff" stroke-width="0.7"/><path d="M337.4 421.8h13" stroke="#fff" stroke-width="1.5" opacity="0.75" stroke-dasharray="2.28 0.33 1.61 0.29 1.22 0.26 1.15 0.42 1.06 0.44 1.63 0.46 1.32 0.44 1.18 0.42"/><path d="M341.8 432h4.2l-.6 -1c0 -3 -3 -3 -3 0z" fill="#fff"/><circle cx="346.2" cy="428.6" r="1.1" fill="#e0362c"/><path d="M336.2 434.2h15.6" stroke="#bbb" stroke-width="1.4" opacity="0.5" stroke-dasharray="1.69 0.46 1.77 0.33 2.04 0.26 2.32 0.53 1.24 0.4 2.37 0.31 1.18 0.48 1.34 0.36"/><path d="M339 436.8h10" stroke="#bbb" stroke-width="1.4" opacity="0.5" stroke-dasharray="1.97 0.37 2.22 0.53 1.58 0.39 1.64 0.35 1.66 0.49"/><rect x="342" y="442.6" width="3.8" height="3.6" fill="#fff" rx="0.4"/><path d="M336 447.6h16" stroke="#bbb" stroke-width="1.4" opacity="0.5" stroke-dasharray="1.42 0.5 0.97 0.26 1.77 0.54 2.22 0.32 1.32 0.46 2.26 0.36 2.38 0.48 2.09 0.29"/><path d="M342.6 450.2h2.6" stroke="#bbb" stroke-width="1.4" opacity="0.5"/><rect x="341.8" y="455.6" width="1.8" height="1.8" fill="#fff"/><rect x="341.8" y="457.8" width="1.8" height="1.8" fill="#fff"/><rect x="344" y="455.6" width="1.8" height="1.8" fill="#fff"/><rect x="344" y="457.8" width="1.8" height="1.8" fill="#fff"/><path d="M339.4 462.2h9" stroke="#bbb" stroke-width="1.4" opacity="0.5" stroke-dasharray="1.28 0.32 1.22 0.33 1.57 0.31 1.52 0.39 2.15 0.36"/><path d="M342 469.6l3.6 3.6" fill="none" stroke="#fff" stroke-width="0.9"/><circle cx="342.2" cy="469.8" r="0.9" fill="#fff"/><circle cx="345.6" cy="473.2" r="0.7" fill="#fff"/><path d="M340.4 475.6h7" stroke="#bbb" stroke-width="1.4" opacity="0.5" stroke-dasharray="1.33 0.35 1.06 0.55 2.47 0.36 2.09 0.34"/><rect x="341.8" y="483.4" width="4.2" height="4" fill="#fff" rx="0.9"/><circle cx="343.9" cy="485.4" r="0.8" fill="#4a4a4a"/><path d="M338.6 489.8h10.6" stroke="#bbb" stroke-width="1.4" opacity="0.5" stroke-dasharray="1.94 0.33 1.93 0.41 2.38 0.53 1.04 0.32 1.78 0.47"/><rect x="353.7" y="398.9" width="39.9" height="104.5" fill="#f3f3f3"/><rect x="374.6" y="399.6" width="18.4" height="4.6" fill="#dedede"/><path d="M358.8 402h9.4" stroke="#444" stroke-width="1.5" opacity="0.6" stroke-dasharray="1.04 0.43 1.35 0.32 1.86 0.34 2.1 0.39 1.53 0.42"/><path d="M377 402h14" stroke="#555" stroke-width="1.5" opacity="0.5" stroke-dasharray="1.24 0.5 1.34 0.27 1.48 0.36 1.35 0.4 1.49 0.38 1.84 0.29 1.52 0.47 1.45 0.43"/><rect x="353.7" y="404.2" width="39.9" height="0.35" fill="#d2d2d2"/><rect x="393.4" y="398.9" width="0.4" height="104.5" fill="#dcdcdc"/><circle cx="355.9" cy="408.3" r="1.2" fill="#2a7ad8"/><path d="M358.8 408.3h15" stroke="#2a7ad8" stroke-width="1.8" opacity="0.7" stroke-dasharray="2.07 0.42 2.48 0.48 1.3 0.27 1 0.31 2.37 0.3 2.01 0.53 2.49 0.32"/><path d="M359.6 411.4h1.6" stroke="#444" stroke-width="1" opacity="0.7"/><path d="M362.6 411.4h21.4" stroke="#333" stroke-width="1.7" opacity="0.52" stroke-dasharray="1.4 0.4 2.38 0.53 1.94 0.55 1.25 0.36 1.29 0.42 1.63 0.37 1.1 0.52 1.99 0.29 2.41 0.32 2.58 0.38"/><path d="M359.6 414.6h1.6" stroke="#444" stroke-width="1" opacity="0.7"/><path d="M362.6 414.6h17.6" stroke="#333" stroke-width="1.7" opacity="0.52" stroke-dasharray="1.38 0.44 1.2 0.36 1.45 0.33 2.11 0.41 1.72 0.31 1.53 0.37 1.94 0.42 2.09 0.44 1.33 0.5"/><path d="M359.6 417.8h1.6" stroke="#444" stroke-width="1" opacity="0.7"/><path d="M362.6 417.8h6" stroke="#333" stroke-width="1.7" opacity="0.52" stroke-dasharray="1.83 0.44 2.3 0.36 1.03 0.51"/><path d="M359.6 421h1.6" stroke="#444" stroke-width="1" opacity="0.7"/><path d="M362.6 421h16.4" stroke="#222" stroke-width="2" opacity="0.68" stroke-dasharray="2.54 0.34 2.14 0.52 2.03 0.4 1.06 0.33 1.92 0.44 2.11 0.44 1.33 0.41 2.01 0.49"/><path d="M359.6 424.3h1.6" stroke="#444" stroke-width="1" opacity="0.7"/><path d="M362.6 424.3h14.6" stroke="#222" stroke-width="2" opacity="0.68" stroke-dasharray="1.02 0.38 1.6 0.53 1.76 0.41 2.47 0.41 1.34 0.42 1.31 0.39 2.04 0.36 1.89 0.31"/><path d="M362.6 427.6h7.4" stroke="#999" stroke-width="1.7" opacity="0.42" stroke-dasharray="2.59 0.51 2.59 0.36 1.56 0.33"/><path d="M362.6 430.8h12.4" stroke="#999" stroke-width="1.7" opacity="0.42" stroke-dasharray="0.95 0.34 1.36 0.42 1.48 0.32 2.59 0.51 1.17 0.52 1.1 0.29 1.93 0.39"/><path d="M359.6 434.2h1.6" stroke="#444" stroke-width="1" opacity="0.7"/><path d="M362.6 434.2h23" stroke="#333" stroke-width="1.7" opacity="0.52" stroke-dasharray="2.61 0.51 1.28 0.32 2.28 0.28 1.48 0.45 1.1 0.5 2.4 0.46 1.99 0.32 0.99 0.39 1.9 0.52 1.3 0.42 1.44 0.28"/><path d="M359.6 437.5h1.6" stroke="#444" stroke-width="1" opacity="0.7"/><path d="M362.6 437.5h20" stroke="#666" stroke-width="1.7" opacity="0.46" stroke-dasharray="2.09 0.32 2.37 0.53 1.08 0.34 1.36 0.33 1.86 0.47 2.31 0.37 1.74 0.46 2 0.26 1.26 0.48 2.31 0.51"/><path d="M362.6 440.8h18" stroke="#999" stroke-width="1.7" opacity="0.42" stroke-dasharray="2.26 0.27 1.8 0.31 1.9 0.35 2.2 0.44 1.29 0.43 1.06 0.52 2.26 0.46 1.07 0.48 1.89 0.42"/><path d="M362.6 444h13.6" stroke="#999" stroke-width="1.7" opacity="0.42" stroke-dasharray="1.96 0.5 1.56 0.26 1.08 0.32 1.93 0.29 2 0.51 1.29 0.49 1.17 0.3"/><circle cx="355.9" cy="447.3" r="1.2" fill="#2a7ad8"/><path d="M358.8 447.3h18.6" stroke="#2a7ad8" stroke-width="1.8" opacity="0.7" stroke-dasharray="1.26 0.51 1.61 0.54 1.9 0.51 1.87 0.4 1.3 0.33 1.53 0.43 1.9 0.49 1.26 0.27 1.26 0.26 1.51 0.31"/><path d="M359.6 450.6h1.6" stroke="#444" stroke-width="1" opacity="0.7"/><path d="M362.6 450.6h21.4" stroke="#333" stroke-width="1.7" opacity="0.52" stroke-dasharray="1.34 0.5 1.18 0.43 1.36 0.39 1.32 0.27 2.43 0.31 2.18 0.5 2.23 0.54 2.6 0.47 2.51 0.45 2.06 0.44"/><path d="M359.6 453.9h1.6" stroke="#444" stroke-width="1" opacity="0.7"/><path d="M362.6 453.9h6" stroke="#666" stroke-width="1.7" opacity="0.46" stroke-dasharray="1.26 0.41 1.85 0.52 2.34 0.5"/><path d="M359.6 457.2h1.6" stroke="#444" stroke-width="1" opacity="0.7"/><path d="M362.6 457.2h17" stroke="#222" stroke-width="2" opacity="0.68" stroke-dasharray="2.21 0.42 2.31 0.43 1.61 0.55 1.99 0.38 1.8 0.52 2.54 0.43 2.06 0.55"/><path d="M359.6 460.4h1.6" stroke="#444" stroke-width="1" opacity="0.7"/><path d="M362.6 460.4h16" stroke="#222" stroke-width="2" opacity="0.68" stroke-dasharray="1.03 0.5 2.36 0.41 1.42 0.26 1.54 0.27 1.13 0.5 2.16 0.41 2.58 0.38 2.59 0.37"/><path d="M359.6 463.6h1.6" stroke="#444" stroke-width="1" opacity="0.7"/><path d="M362.6 463.6h14.6" stroke="#222" stroke-width="2" opacity="0.68" stroke-dasharray="1.77 0.55 1.16 0.33 1.27 0.28 2.29 0.27 1.57 0.29 1.71 0.49 2.15 0.54"/><path d="M362.6 467h7.4" stroke="#999" stroke-width="1.7" opacity="0.42" stroke-dasharray="2.55 0.42 1.76 0.3 1.16 0.33 2.54 0.29"/><path d="M362.6 470.3h20.4" stroke="#999" stroke-width="1.7" opacity="0.42" stroke-dasharray="2.22 0.42 1.05 0.51 1.26 0.34 2.08 0.3 1.14 0.51 2.44 0.41 2.62 0.26 2.18 0.34 2.45 0.55"/><path d="M362.6 473.5h16.4" stroke="#999" stroke-width="1.7" opacity="0.42" stroke-dasharray="2.61 0.36 1.33 0.53 2.33 0.38 1.84 0.44 1.65 0.51 1.57 0.37 1.95 0.47 1.23 0.46"/><path d="M362.6 476.7h18.6" stroke="#999" stroke-width="1.7" opacity="0.42" stroke-dasharray="2.14 0.49 1.42 0.38 2.53 0.26 1.42 0.36 0.96 0.33 1.2 0.48 2.3 0.41 2.39 0.48 2.31 0.5"/><path d="M359.6 480h1.6" stroke="#444" stroke-width="1" opacity="0.7"/><path d="M362.6 480h19" stroke="#666" stroke-width="1.7" opacity="0.46" stroke-dasharray="2.57 0.37 1.08 0.39 1.4 0.38 2.58 0.27 2.06 0.3 1.44 0.51 1.23 0.52 2.15 0.25 1.56 0.27"/><path d="M359.6 483.4h1.6" stroke="#444" stroke-width="1" opacity="0.7"/><path d="M362.6 483.4h20.4" stroke="#666" stroke-width="1.7" opacity="0.46" stroke-dasharray="1.5 0.28 1.24 0.5 1.55 0.34 1.49 0.47 2.58 0.47 2.56 0.5 2.57 0.32 1.5 0.33 1.15 0.49 1.56 0.45"/><circle cx="355.9" cy="486.9" r="1.2" fill="#38b6f0"/><path d="M358.8 486.9h18" stroke="#2a7ad8" stroke-width="1.8" opacity="0.7" stroke-dasharray="1.54 0.45 2.6 0.35 1.62 0.33 2.52 0.47 2.7 0.51 1.7 0.35 1.69 0.43 2.35 0.47"/><path d="M359.6 490h1.6" stroke="#444" stroke-width="1" opacity="0.7"/><path d="M362.6 490h21.4" stroke="#333" stroke-width="1.7" opacity="0.52" stroke-dasharray="1.05 0.28 1.5 0.44 2.4 0.49 1.08 0.3 1.6 0.27 1.59 0.52 1.57 0.4 1.33 0.49 2.59 0.26 2.54 0.53 1.6 0.38"/><path d="M359.6 493.2h1.6" stroke="#444" stroke-width="1" opacity="0.7"/><path d="M362.6 493.2h4" stroke="#222" stroke-width="2" opacity="0.68" stroke-dasharray="1.93 0.51 1.68 0.37"/><path d="M359.6 496.3h1.6" stroke="#444" stroke-width="1" opacity="0.7"/><path d="M362.6 496.3h5.6" stroke="#333" stroke-width="1.7" opacity="0.52" stroke-dasharray="2.53 0.37 2.37 0.35"/><rect x="390.2" y="405" width="2.2" height="94" fill="#ececec"/><rect x="390.6" y="408" width="1.5" height="33" fill="#c6c6c6"/><rect x="355" y="499.4" width="34" height="1.6" fill="#ececec"/><rect x="357" y="499.6" width="24" height="1.2" fill="#c6c6c6"/><path d="M354.2 500.2h0.8" stroke="#777" stroke-width="1" opacity="0.7"/><path d="M387.4 500.2h0.8" stroke="#777" stroke-width="1" opacity="0.7"/><path d="M391 407h0.8" stroke="#777" stroke-width="1" opacity="0.6"/><path d="M391 497.4h0.8" stroke="#777" stroke-width="1" opacity="0.6"/><rect x="394.4" y="495.4" width="21.8" height="5.5" fill="#2d6fdb" rx="0.4"/><path d="M401.4 498.2h8" stroke="#fff" stroke-width="1.6" opacity="0.8" stroke-dasharray="2.46 0.51 1.08 0.38 1.23 0.37 2.36 0.48"/><rect x="597.5" y="495.4" width="22" height="5.5" fill="#2d6fdb" rx="0.4"/><path d="M599.2 498.2h18.6" stroke="#fff" stroke-width="1.5" opacity="0.7" stroke-dasharray="1.46 0.42 1.23 0.37 2.47 0.32 1.02 0.51 2.04 0.33 2.32 0.53 2.46 0.53 2.34 0.36"/><rect x="353.7" y="503.4" width="268" height="8" fill="#404040"/><path d="M356.6 506h29" stroke="#bbb" stroke-width="1.3" opacity="0.55" stroke-dasharray="1.55 0.49 1.09 0.42 1.77 0.44 2.41 0.33 1.5 0.34 2.03 0.26 1.64 0.31 1.78 0.32 2.47 0.34 1.95 0.47 2.48 0.34 1.2 0.41 1.83 0.26 2.24 0.44"/><path d="M356.6 508.6h46" stroke="#bbb" stroke-width="1.3" opacity="0.55" stroke-dasharray="2.29 0.44 2.5 0.45 2.59 0.46 1.85 0.35 1.89 0.26 1.75 0.46 1.18 0.43 2.74 0.48 2.17 0.45 1.88 0.29 1.02 0.53 2 0.54 1.4 0.45 2.17 0.31 1.71 0.45 2.07 0.34 2 0.34 1.8 0.42 2.61 0.33 2.16 0.33"/><path d="M604.4 507.2h12" stroke="#ddd" stroke-width="1.6" opacity="0.6" stroke-dasharray="2.03 0.43 1.92 0.36 1.51 0.31 1.65 0.47 2.48 0.36 1.93 0.5"/></svg></div><svg style="left:0;top:0;filter:drop-shadow(1.3px 1px .9px rgba(0,25,60,.6))" width="1024" height="576" viewBox="0 0 1024 576"><rect x="322.55" y="53.3" width="305" height="154.2" fill="none" stroke="#f90505" stroke-width="3.05"/></svg><svg style="left:25.40px;top:56.20px;" width="10.80" height="10.80" viewBox="0 0 100 100"><rect x="2" y="19" width="96" height="65" fill="#5cb3ee"/><rect x="2" y="19" width="96" height="65" fill="none" stroke="#8fd0f8" stroke-width="4"/><rect x="8" y="25" width="44" height="44" fill="#cfe9fb"/><circle cx="34" cy="40" r="11" fill="#f5c83a"/><path d="M22 44A12 12 0 0 1 34 28V40Z" fill="#3a7fd0"/><rect x="60" y="28" width="30" height="8" fill="#9fd6f9"/><rect x="60" y="43" width="30" height="8" fill="#9fd6f9"/><rect x="60" y="58" width="30" height="8" fill="#9fd6f9"/><rect x="10" y="72" width="30" height="7" fill="#f2d86a"/></svg><svg style="left:330.80px;top:55.80px;" width="11.40" height="11.40" viewBox="0 0 100 100"><path d="M4 14H38L46 22H96V86H4Z" fill="#f6b73c"/><rect x="4" y="26" width="92" height="60" fill="#ffd968"/><rect x="4" y="26" width="92" height="10" fill="#ffe48a"/><path d="M24 52H76V86H24Z" fill="#3d8fe0"/><path d="M40 66H60V86H40Z" fill="#ffd968"/><rect x="36" y="62" width="28" height="6" fill="#2a6fc0"/></svg><svg style="left:25.00px;top:212.30px;" width="11.30" height="11.30" viewBox="0 0 100 100"><defs><linearGradient id="n2" x1="1" y1="0" x2="0" y2="1"><stop offset="0" stop-color="#f4fbfc"/><stop offset=".55" stop-color="#bfe0e6"/><stop offset="1" stop-color="#2f9aae"/></linearGradient></defs><path d="M38 4L96 12L82 96L4 78Z" fill="url(#n2)"/><path d="M38 4L96 12L93 24L34 15Z" fill="#e9f3f5"/><path d="M96 12L82 96L76 94L90 12Z" fill="#d8cdb8"/><path d="M34 30L78 38M30 44L76 52M26 58L72 66" stroke="#7fb6c2" stroke-width="4" opacity=".7"/></svg><svg style="left:333.20px;top:212.20px;" width="11.80" height="11.80" viewBox="0 0 100 100"><rect x="44" y="12" width="52" height="76" fill="#e6efe8"/><rect x="44" y="12" width="52" height="76" fill="none" stroke="#1f7a44" stroke-width="7"/><path d="M58 12V88M76 12V88" stroke="#7fb08e" stroke-width="6"/><rect x="2" y="4" width="56" height="92" fill="#1d7443"/><path d="M16 30L44 70M44 30L16 70" stroke="#fff" stroke-width="9"/></svg><svg style="left:24.00px;top:367.50px;" width="13.00" height="13.00" viewBox="0 0 100 100"><circle cx="50" cy="50" r="48" fill="#fff"/><path d="M50 2A48 48 0 0 1 91.6 26H50A24 24 0 0 0 29.2 38L8.4 26A48 48 0 0 1 50 2Z" fill="#ea4335"/><path d="M8.4 26A48 48 0 0 0 45 97.7L65 62A24 24 0 0 1 29.2 62Z" fill="#34a853"/><path d="M91.6 26A48 48 0 0 1 45 97.7L70.8 62A24 24 0 0 0 70.8 38L50 26Z" fill="#fbbc05"/><path d="M50 2A48 48 0 0 1 91.6 26H50Z" fill="#ea4335"/><circle cx="50" cy="50" r="22" fill="#fff"/><circle cx="50" cy="50" r="17.5" fill="#3f7fe8"/></svg><svg style="left:332.80px;top:367.60px;" width="12.60" height="12.60" viewBox="0 0 100 100"><defs><linearGradient id="c3" x1="0" y1="0" x2="0" y2="1"><stop offset="0" stop-color="#f4553c"/><stop offset=".5" stop-color="#e8342a"/><stop offset="1" stop-color="#e02222"/></linearGradient></defs><path d="M92 24A43 45 0 1 0 92 80L73 64A19 20 0 1 1 73 40Z" fill="url(#c3)"/><path d="M58 6L61 30" stroke="#fbd0c0" stroke-width="3" opacity=".7"/><path d="M34 34L52 46L42 64L26 52Z" fill="#2f6fd0"/><path d="M26 48L48 64L34 94Q14 100 0 86Q-4 68 8 58Z" fill="#f8dca6"/><path d="M8 60L26 50L30 58L6 72Z" fill="#fdeecb"/></svg><svg style="left:41.8px;top:57.8px;" width="78.5" height="10.08" viewBox="0 0 78.5 10.08"><text class="jt" x="0" y="7.26" font-size="7.2" fill="#fff" textLength="77.5" lengthAdjust="spacingAndGlyphs">すべてのコントロール パネル項目</text></svg><svg style="left:347px;top:57.9px;" width="37.5" height="10.08" viewBox="0 0 37.5 10.08"><text class="jt" x="0" y="7.26" font-size="7.2" fill="#fff" textLength="36.5" lengthAdjust="spacingAndGlyphs">エクスプローラー</text></svg><svg style="left:41.8px;top:214.1px;" width="13.5" height="9.94" viewBox="0 0 13.5 9.94"><text class="jt" x="0" y="7.16" font-size="7.1" fill="#fff" textLength="12.5" lengthAdjust="spacingAndGlyphs">無題</text></svg><span class="lt" style="left:56.3px;top:215.97px;font-size:7px;line-height:7px;color:#fff;">-</span><svg style="left:60.6px;top:214.1px;" width="16.4" height="9.94" viewBox="0 0 16.4 9.94"><text class="jt" x="0" y="7.16" font-size="7.1" fill="#fff" textLength="15.4" lengthAdjust="spacingAndGlyphs">メモ帳</text></svg><span class="lt" style="left:349.8px;top:216.07px;font-size:7px;line-height:7px;color:#fff;transform:scaleX(0.8845);">Book1 - Excel</span><svg style="left:41.7px;top:370.4px;" width="25.5" height="9.94" viewBox="0 0 25.5 9.94"><text class="jt" x="0" y="7.16" font-size="7.1" fill="#fff" textLength="24.5" lengthAdjust="spacingAndGlyphs">新しいタブ</text></svg><span class="lt" style="left:68.4px;top:372.17px;font-size:7px;line-height:7px;color:#fff;transform:scaleX(0.9238);">- Google Chrome</span><span class="lt" style="left:350px;top:372.17px;font-size:7px;line-height:7px;color:#fff;transform:scaleX(0.8909);">CCleaner - Professional Edition</span><div style="left:992.3px;top:59px;width:1.7px;height:469.6px;background:#c4cde8"></div><div style="left:987.5px;top:48px;width:8.1px;height:8.1px;border:1.55px solid #d9e0f4;border-radius:50%"></div><svg style="left:0;top:0" width="1024" height="576" viewBox="0 0 1024 576"><defs><filter id="ash" x="-30%" y="-30%" width="160%" height="160%"><feGaussianBlur stdDeviation="1.3"/></filter></defs><g filter="url(#ash)" opacity=".42" transform="translate(4.2,-4.4)"><path d="M668 166L633.5 137M645.3 139L632.8 136.4L638.3 148.4" stroke="#081848" stroke-width="3" fill="none" stroke-linecap="round"/></g><path d="M673 169.6L636 138.8" stroke="#d0d83a" stroke-width="2.7" fill="none" stroke-linecap="round"/><path d="M646 140.2L632.8 136.5L638.6 148.8" fill="none" stroke="#d0d83a" stroke-width="2.3" stroke-linejoin="round" stroke-linecap="round"/><path d="M632.8 136.5L642.4 139.2L637 144.4Z" fill="#d0d83a"/></svg><span class="lt" style="left:635.8px;top:177.3px;font-size:9.8px;line-height:9.8px;color:#efe526;font-weight:700;transform:scaleX(0.7339);filter:drop-shadow(.5px .5px .25px rgba(30,35,10,.95))">1</span><svg style="left:645px;top:175.3px;filter:drop-shadow(.5px .5px .25px rgba(30,35,10,.95))" width="122.4" height="13.02" viewBox="0 0 122.4 13.02"><text class="jt" x="0" y="9.37" font-size="9.3" font-weight="700" fill="#efe526" textLength="121.4" lengthAdjust="spacingAndGlyphs">エクスプローラーを使う場合</text></svg><span class="lt" style="left:635.8px;top:198.1px;font-size:9.8px;line-height:9.8px;color:#efe526;font-weight:700;transform:scaleX(0.9541);filter:drop-shadow(.5px .5px .25px rgba(30,35,10,.95))">2</span><svg style="left:645px;top:196.1px;filter:drop-shadow(.5px .5px .25px rgba(30,35,10,.95))" width="105" height="13.02" viewBox="0 0 105 13.02"><text class="jt" x="0" y="9.37" font-size="9.3" font-weight="700" fill="#efe526" textLength="104" lengthAdjust="spacingAndGlyphs">エクスプローラーを選択</text></svg><svg style="left:749.6px;top:196.1px;filter:drop-shadow(.5px .5px .25px rgba(30,35,10,.95))" width="10.3" height="13.02" viewBox="0 0 10.3 13.02"><text class="jt" x="0" y="9.37" font-size="9.3" font-weight="700" fill="#efe526">、</text></svg><svg style="left:751.6px;top:196.1px;filter:drop-shadow(.5px .5px .25px rgba(30,35,10,.95))" width="10.3" height="13.02" viewBox="0 0 10.3 13.02"><text class="jt" x="0" y="9.37" font-size="9.3" font-weight="700" fill="#efe526">「</text></svg><span class="lt" style="left:761.9px;top:197.5px;font-size:9.8px;line-height:9.8px;color:#efe526;font-weight:700;transform:scaleX(1.0237);filter:drop-shadow(.5px .5px .25px rgba(30,35,10,.95))">ENTER</span><svg style="left:795.8px;top:196.1px;filter:drop-shadow(.5px .5px .25px rgba(30,35,10,.95))" width="10.3" height="13.02" viewBox="0 0 10.3 13.02"><text class="jt" x="0" y="9.37" font-size="9.3" font-weight="700" fill="#efe526">」</text></svg><svg style="left:801.5px;top:196.1px;filter:drop-shadow(.5px .5px .25px rgba(30,35,10,.95))" width="67.8" height="13.02" viewBox="0 0 67.8 13.02"><text class="jt" x="0" y="9.37" font-size="9.3" font-weight="700" fill="#efe526" textLength="66.8" lengthAdjust="spacingAndGlyphs">キーを押します</text></svg><div style="left:0;top:554.7px;width:1024px;height:21.3px;background:linear-gradient(90deg,#20363f 0,#21343f 300px,#22313f 520px,#1f2d42 700px,#1c2a45 860px,#1b2847 1024px)"></div><svg style="left:8px;top:561px" width="9.4" height="9" viewBox="0 0 94 90"><path fill="#fff" d="M0 13L38 8V42H0ZM43 7L94 0V42H43ZM0 47H38V82L0 77ZM43 47H94V90L43 83Z"/></svg><div style="left:25.6px;top:555px;width:183.4px;height:21px;background:#f1f1f1;"></div><svg style="left:31.5px;top:559.6px" width="10" height="11" viewBox="0 0 10 11"><circle cx="6.3" cy="4.2" r="2.75" fill="none" stroke="#333" stroke-width=".85"/><path d="M4.3 6.3L.8 9.7" stroke="#333" stroke-width=".95" stroke-linecap="round"/></svg><svg style="left:47px;top:561px;" width="61" height="10.64" viewBox="0 0 61 10.64"><text class="jt" x="0" y="7.66" font-size="7.6" fill="#3c3c3c" textLength="60" lengthAdjust="spacingAndGlyphs">ここに入力して検索</text></svg><div style="left:217.5px;top:561.2px;width:5.6px;height:5.6px;border:1.35px solid #fff;border-radius:50%"></div><div style="left:234.5px;top:554.7px;width:27.2px;height:21.3px;background:rgba(255,255,255,.07);"></div><svg style="left:242.6px;top:561.2px" width="10" height="8.4" viewBox="0 0 100 84"><g fill="none" stroke="#e8eef2" stroke-width="9"><rect x="5" y="5" width="52" height="30"/><rect x="5" y="49" width="52" height="30"/></g><g fill="#e8eef2"><rect x="68" y="0" width="9" height="84"/><rect x="80" y="10" width="16" height="20"/><rect x="80" y="50" width="16" height="22"/></g></svg><div style="left:290.85px;top:575px;width:20.6px;height:1px;background:#5d8ac6;"></div><div style="left:421.4px;top:575px;width:20.6px;height:1px;background:#5d8ac6;"></div><div style="left:447.55px;top:575px;width:20.6px;height:1px;background:#5d8ac6;"></div><div style="left:473.7px;top:575px;width:20.6px;height:1px;background:#5d8ac6;"></div><div style="left:499.85px;top:575px;width:20.6px;height:1px;background:#5d8ac6;"></div><div style="left:526px;top:575px;width:20.6px;height:1px;background:#5d8ac6;"></div><div style="left:552.15px;top:575px;width:20.6px;height:1px;background:#5d8ac6;"></div><svg style="left:268.10px;top:558.50px;" width="13.40" height="13.40" viewBox="0 0 100 100"><defs><linearGradient id="e4" x1="0" y1="0" x2="1" y2="1"><stop offset="0" stop-color="#35c1f1"/><stop offset=".5" stop-color="#1b9de2"/><stop offset="1" stop-color="#0b5fc0"/></linearGradient><linearGradient id="e5" x1="0" y1="0" x2="1" y2="0"><stop offset="0" stop-color="#2bc3d2"/><stop offset="1" stop-color="#6ddc4a"/></linearGradient></defs><circle cx="50" cy="50" r="49" fill="url(#e4)"/><path d="M18 20C35 0 80 0 96 35C102 55 92 68 74 68C62 68 56 62 58 55C62 48 62 38 48 36C30 34 16 44 8 60C2 45 8 30 18 20Z" fill="url(#e5)"/><path d="M50 36C36 36 28 48 30 62C33 82 55 96 80 88C60 100 25 95 10 70C14 45 30 32 50 36Z" fill="#0c59a4" opacity=".85"/><path d="M74 68C62 68 56 62 58 55C60 50 60 46 57 43C45 48 44 64 56 74C68 84 88 80 94 66C90 67 82 68 74 68Z" fill="#1e2f3f"/></svg><svg style="left:294.85px;top:559.10px;" width="12.20" height="12.20" viewBox="0 0 100 100"><path d="M4 14H38L46 22H96V86H4Z" fill="#f6b73c"/><rect x="4" y="26" width="92" height="60" fill="#ffd968"/><rect x="4" y="26" width="92" height="10" fill="#ffe48a"/><path d="M24 52H76V86H24Z" fill="#3d8fe0"/><path d="M40 66H60V86H40Z" fill="#ffd968"/><rect x="36" y="62" width="28" height="6" fill="#2a6fc0"/></svg><svg style="left:320.60px;top:558.70px;" width="13.00" height="13.00" viewBox="0 0 100 100"><path d="M34 28V18C34 4 66 4 66 18V28" fill="none" stroke="#e8e8e8" stroke-width="7"/><rect x="6" y="26" width="88" height="70" fill="#fff"/><rect x="30" y="40" width="18" height="18" fill="#f25022"/><rect x="52" y="40" width="18" height="18" fill="#7fba00"/><rect x="30" y="62" width="18" height="18" fill="#00a4ef"/><rect x="52" y="62" width="18" height="18" fill="#ffb900"/></svg><svg style="left:346.25px;top:558.20px;" width="14.00" height="14.00" viewBox="0 0 100 100"><path d="M4 38L50 8L96 38V90H4Z" fill="#fff"/><path d="M14 36H88L62 58L70 74L46 56Z" fill="#1f2f3e"/></svg><svg style="left:373.60px;top:559.40px;" width="11.60" height="11.60" viewBox="0 0 100 100"><defs><linearGradient id="m6" x1="0" y1="0" x2="1" y2="1"><stop offset="0" stop-color="#4f93cf"/><stop offset="1" stop-color="#86c6ee"/></linearGradient></defs><rect x="2" y="12" width="96" height="76" fill="url(#m6)"/><rect x="2" y="12" width="96" height="76" fill="none" stroke="#3d78b4" stroke-width="5"/><circle cx="42" cy="50" r="27" fill="#f57a1c"/><circle cx="42" cy="50" r="27" fill="none" stroke="#f9a860" stroke-width="4"/><path d="M33 34L60 50L33 66Z" fill="#fff"/></svg><svg style="left:399.25px;top:558.90px;" width="12.60" height="12.60" viewBox="0 0 100 100"><defs><radialGradient id="f7" cx=".6" cy=".25" r=".9"><stop offset="0" stop-color="#ffe640"/><stop offset=".35" stop-color="#ff9a1f"/><stop offset=".7" stop-color="#ff3d4f"/><stop offset="1" stop-color="#e2207a"/></radialGradient><radialGradient id="f8" cx=".5" cy=".5" r=".5"><stop offset="0" stop-color="#8a3df0"/><stop offset="1" stop-color="#5a28b8"/></radialGradient></defs><path d="M62 2C70 8 78 16 80 26C90 34 98 48 96 64C92 86 72 99 50 99C24 99 4 80 4 54C4 40 10 28 18 22C18 30 22 36 28 38C32 26 44 18 58 20C62 14 64 8 62 2Z" fill="url(#f7)"/><circle cx="48" cy="56" r="21" fill="url(#f8)"/><path d="M28 38C38 30 54 32 62 40C54 38 46 42 46 50C46 58 56 62 64 58C60 70 44 76 32 68C22 60 22 46 28 38Z" fill="#ff8a1c" opacity=".9"/></svg><svg style="left:425.20px;top:558.70px;" width="13.00" height="13.00" viewBox="0 0 100 100"><path d="M40 10L94 44L58 92L6 56Z" fill="#54708a"/><path d="M40 10L94 44L58 92L6 56Z" fill="none" stroke="#6f8ea8" stroke-width="4"/><path d="M30 34L70 60M22 46L62 72" stroke="#405a73" stroke-width="6"/></svg><svg style="left:451.45px;top:558.80px;" width="12.80" height="12.80" viewBox="0 0 100 100"><rect x="44" y="12" width="52" height="76" fill="#e6efe8"/><rect x="44" y="12" width="52" height="76" fill="none" stroke="#1f7a44" stroke-width="7"/><path d="M58 12V88M76 12V88" stroke="#7fb08e" stroke-width="6"/><rect x="2" y="4" width="56" height="92" fill="#1d7443"/><path d="M16 30L44 70M44 30L16 70" stroke="#fff" stroke-width="9"/></svg><svg style="left:477.50px;top:558.70px;" width="13.00" height="13.00" viewBox="0 0 100 100"><defs><linearGradient id="c9" x1="0" y1="0" x2="0" y2="1"><stop offset="0" stop-color="#f4553c"/><stop offset=".5" stop-color="#e8342a"/><stop offset="1" stop-color="#e02222"/></linearGradient></defs><path d="M92 24A43 45 0 1 0 92 80L73 64A19 20 0 1 1 73 40Z" fill="url(#c9)"/><path d="M58 6L61 30" stroke="#fbd0c0" stroke-width="3" opacity=".7"/><path d="M34 34L52 46L42 64L26 52Z" fill="#2f6fd0"/><path d="M26 48L48 64L34 94Q14 100 0 86Q-4 68 8 58Z" fill="#f8dca6"/><path d="M8 60L26 50L30 58L6 72Z" fill="#fdeecb"/></svg><svg style="left:503.75px;top:558.80px;" width="12.80" height="12.80" viewBox="0 0 100 100"><circle cx="50" cy="50" r="48" fill="#fff"/><path d="M50 2A48 48 0 0 1 91.6 26H50A24 24 0 0 0 29.2 38L8.4 26A48 48 0 0 1 50 2Z" fill="#ea4335"/><path d="M8.4 26A48 48 0 0 0 45 97.7L65 62A24 24 0 0 1 29.2 62Z" fill="#34a853"/><path d="M91.6 26A48 48 0 0 1 45 97.7L70.8 62A24 24 0 0 0 70.8 38L50 26Z" fill="#fbbc05"/><path d="M50 2A48 48 0 0 1 91.6 26H50Z" fill="#ea4335"/><circle cx="50" cy="50" r="22" fill="#fff"/><circle cx="50" cy="50" r="17.5" fill="#3f7fe8"/></svg><svg style="left:530.60px;top:559.50px;" width="11.40" height="11.40" viewBox="0 0 100 100"><defs><linearGradient id="n10" x1="1" y1="0" x2="0" y2="1"><stop offset="0" stop-color="#f4fbfc"/><stop offset=".55" stop-color="#bfe0e6"/><stop offset="1" stop-color="#2f9aae"/></linearGradient></defs><path d="M38 4L96 12L82 96L4 78Z" fill="url(#n10)"/><path d="M38 4L96 12L93 24L34 15Z" fill="#e9f3f5"/><path d="M96 12L82 96L76 94L90 12Z" fill="#d8cdb8"/><path d="M34 30L78 38M30 44L76 52M26 58L72 66" stroke="#7fb6c2" stroke-width="4" opacity=".7"/></svg><svg style="left:556.75px;top:559.50px;" width="11.40" height="11.40" viewBox="0 0 100 100"><rect x="2" y="19" width="96" height="65" fill="#5cb3ee"/><rect x="2" y="19" width="96" height="65" fill="none" stroke="#8fd0f8" stroke-width="4"/><rect x="8" y="25" width="44" height="44" fill="#cfe9fb"/><circle cx="34" cy="40" r="11" fill="#f5c83a"/><path d="M22 44A12 12 0 0 1 34 28V40Z" fill="#3a7fd0"/><rect x="60" y="28" width="30" height="8" fill="#9fd6f9"/><rect x="60" y="43" width="30" height="8" fill="#9fd6f9"/><rect x="60" y="58" width="30" height="8" fill="#9fd6f9"/><rect x="10" y="72" width="30" height="7" fill="#f2d86a"/></svg><svg style="left:589px;top:561px" width="6.9" height="10.9" viewBox="0 0 12 19"><path d="M.6 .8V15.2L4 12L6.6 18L9 17L6.4 11.2H11Z" fill="#fff" stroke="#222" stroke-width=".9" stroke-linejoin="round"/></svg><svg style="left:847px;top:561.2px" width="13" height="8.6" viewBox="0 0 130 86"><g fill="none" stroke="#f2f4f8" stroke-width="9"><rect x="5" y="5" width="120" height="76" rx="6"/><rect x="22" y="34" width="34" height="30"/></g><g fill="#f2f4f8"><rect x="20" y="18" width="90" height="8"/><rect x="68" y="34" width="42" height="8"/><rect x="68" y="48" width="42" height="8"/><rect x="68" y="62" width="42" height="8"/></g></svg><span class="lt" style="left:864.6px;top:563.43px;font-size:8px;line-height:8px;color:#fff;transform:scaleX(0.8615);">12°C</span><svg style="left:884.6px;top:561.7px;" width="30" height="10.5" viewBox="0 0 30 10.5"><text class="jt" x="0" y="7.56" font-size="7.5" fill="#fff" textLength="29" lengthAdjust="spacingAndGlyphs">八王子市</text></svg><svg style="left:922.4px;top:562.6px" width="8.4" height="5" viewBox="0 0 84 50"><path d="M6 44L42 8L78 44" fill="none" stroke="#fff" stroke-width="9"/></svg><svg style="left:935px;top:561.6px" width="9" height="7.6" viewBox="0 0 90 76"><path fill="#f4f6fa" d="M8 22H30V10H44V22H82V62H8Z"/><rect x="0" y="34" width="8" height="16" fill="#f4f6fa"/><rect x="50" y="34" width="24" height="8" fill="#1b2945"/></svg><svg style="left:948.8px;top:560.6px" width="6.4" height="9.6" viewBox="0 0 64 96"><g fill="none" stroke="#f4f6fa" stroke-width="8"><path d="M14 4H50"/><rect x="6" y="22" width="52" height="50" rx="6"/><path d="M18 90H46"/></g><rect x="26" y="40" width="24" height="14" fill="#f4f6fa"/></svg><svg style="left:959.8px;top:560.4px" width="9.8" height="9.8" viewBox="0 0 98 98"><g fill="none" stroke="#f4f6fa" stroke-width="10"><circle cx="49" cy="49" r="42"/><ellipse cx="49" cy="49" rx="18" ry="42"/><path d="M7 49H91M14 26H84M14 72H84"/></g><circle cx="76" cy="78" r="17" fill="#1b2945"/><path d="M64 78H88M76 66V90" stroke="#f4f6fa" stroke-width="8"/></svg><svg style="left:973.2px;top:560.8px" width="8.4" height="9" viewBox="0 0 84 90"><path d="M4 32H20L42 10V80L20 58H4Z" fill="none" stroke="#f4f6fa" stroke-width="8" stroke-linejoin="round"/><path d="M54 30Q64 45 54 60M64 20Q82 45 64 70" fill="none" stroke="#f4f6fa" stroke-width="7" opacity=".8"/></svg><span class="lt" style="left:986.2px;top:562.6px;font-size:10.4px;line-height:10.4px;color:#fff;transform:scaleX(0.9803);">A</span><svg style="left:1001.6px;top:561px" width="9.6" height="9" viewBox="0 0 96 90"><path d="M6 6H90V62H58L46 76V62H6Z" fill="none" stroke="#f4f6fa" stroke-width="8" stroke-linejoin="round"/></svg><div style="left:1021.3px;top:557px;width:0.8px;height:19px;background:rgba(200,210,230,.55);"></div></body></html>
